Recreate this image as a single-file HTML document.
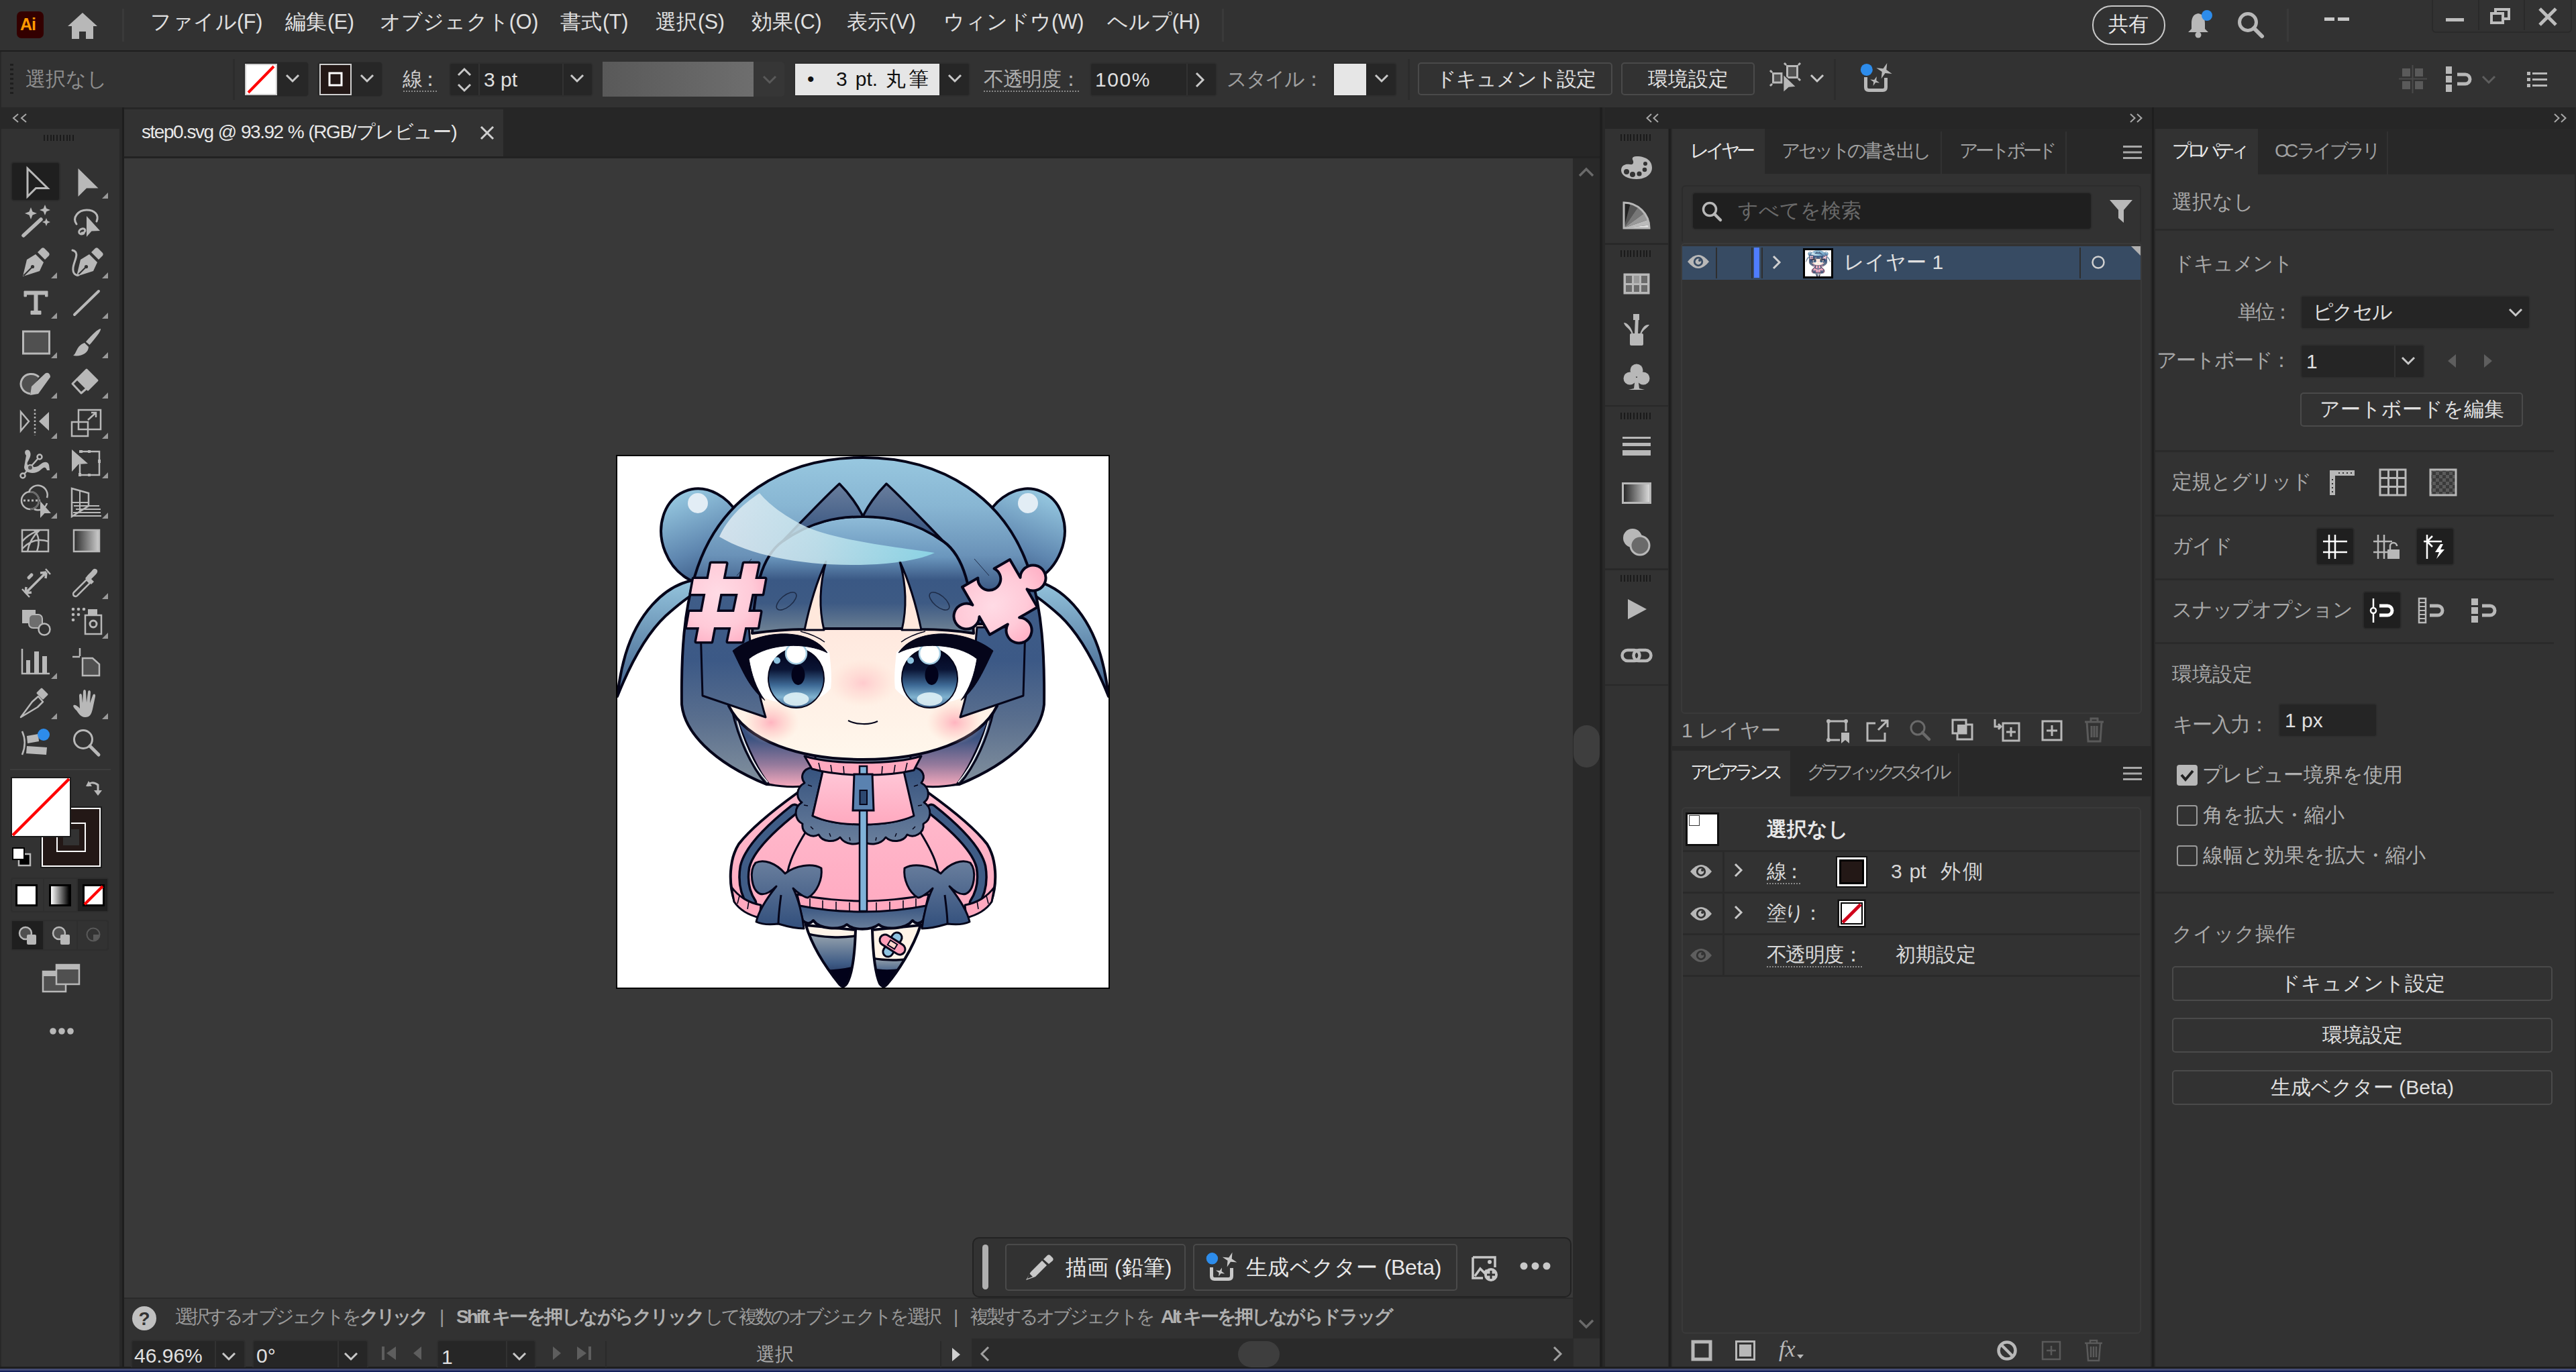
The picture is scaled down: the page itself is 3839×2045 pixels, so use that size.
<!DOCTYPE html>
<html><head><meta charset="utf-8">
<style>
html,body{margin:0;padding:0}
body{width:3839px;height:2045px;overflow:hidden;background:#282828;position:relative;font-family:"Liberation Sans",sans-serif;color:#d8d8d8}
.a{position:absolute}
.t{position:absolute;white-space:nowrap;line-height:1;font-family:"Liberation Sans",sans-serif}
svg{position:absolute;overflow:visible}
</style></head><body>

<!-- MENU BAR -->
<div class="a" style="left:0;top:0;width:3839px;height:75px;background:#323232"></div>
<div class="a" style="left:0;top:75px;width:3839px;height:2px;background:#1e1e1e"></div>

<!-- CONTROL BAR -->
<div class="a" style="left:2px;top:77px;width:3837px;height:83px;background:#323232"></div>

<!-- MENU CONTENT -->
<div class="a" style="left:25px;top:17px;width:40px;height:40px;border-radius:7px;background:#330000"></div>
<div class="t" style="left:30px;top:24px;font-size:25px;font-weight:bold;color:#ff9a00;letter-spacing:-1px">Ai</div>
<svg style="left:100px;top:18px" width="46" height="42" viewBox="0 0 46 42"><path d="M23 1 L45 21 L39 21 L39 40 L28 40 L28 29 L18 29 L18 40 L7 40 L7 21 L1 21 Z" fill="#b8b8b8"/></svg>
<div class="a" style="left:182px;top:13px;width:3px;height:49px;background:#3a3a3a"></div>
<div class="t" style="left:224px;top:17px;font-size:30.5px;color:#e0e0e0;width:167.0px;text-align:justify;text-align-last:justify;letter-spacing:-0.30px">ファイル(F)</div>
<div class="t" style="left:425px;top:17px;font-size:30.5px;color:#e0e0e0;width:102.7px;text-align:justify;text-align-last:justify;letter-spacing:-0.30px">編集(E)</div>
<div class="t" style="left:566px;top:17px;font-size:30.5px;color:#e0e0e0;width:236.0px;text-align:justify;text-align-last:justify;letter-spacing:-0.30px">オブジェクト(O)</div>
<div class="t" style="left:835px;top:17px;font-size:30.5px;color:#e0e0e0;width:101.0px;text-align:justify;text-align-last:justify;letter-spacing:-0.30px">書式(T)</div>
<div class="t" style="left:977px;top:17px;font-size:30.5px;color:#e0e0e0;width:102.7px;text-align:justify;text-align-last:justify;letter-spacing:-0.30px">選択(S)</div>
<div class="t" style="left:1120px;top:17px;font-size:30.5px;color:#e0e0e0;width:104.3px;text-align:justify;text-align-last:justify;letter-spacing:-0.30px">効果(C)</div>
<div class="t" style="left:1262px;top:17px;font-size:30.5px;color:#e0e0e0;width:102.7px;text-align:justify;text-align-last:justify;letter-spacing:-0.30px">表示(V)</div>
<div class="t" style="left:1406px;top:17px;font-size:30.5px;color:#e0e0e0;width:209.1px;text-align:justify;text-align-last:justify;letter-spacing:-0.30px">ウィンドウ(W)</div>
<div class="t" style="left:1650px;top:17px;font-size:30.5px;color:#e0e0e0;width:138.3px;text-align:justify;text-align-last:justify;letter-spacing:-0.30px">ヘルプ(H)</div>
<div class="a" style="left:1821px;top:13px;width:3px;height:49px;background:#3a3a3a"></div>

<div class="a" style="left:3118px;top:8px;width:105px;height:55px;border:2.5px solid #c8c8c8;border-radius:29px"></div>
<div class="t" style="left:3142px;top:21px;font-size:30px;color:#e8e8e8;width:60.0px;text-align:justify;text-align-last:justify;letter-spacing:-0.30px">共有</div>
<svg style="left:3258px;top:14px" width="44" height="44" viewBox="0 0 44 44"><path d="M18 6 C10 7 8 14 8 21 L8 29 L3 34 L33 34 L28 29 L28 21 C28 14 26 7 18 6 Z" fill="#b8b8b8"/><circle cx="18" cy="38" r="4.5" fill="#b8b8b8"/><circle cx="31" cy="9" r="8" fill="#2d8ceb"/></svg>
<svg style="left:3333px;top:16px" width="44" height="44" viewBox="0 0 44 44"><circle cx="17" cy="17" r="12.5" fill="none" stroke="#b8b8b8" stroke-width="5"/><path d="M26 26 L38 38" stroke="#b8b8b8" stroke-width="6" stroke-linecap="round"/></svg>
<div class="a" style="left:3408px;top:13px;width:3px;height:49px;background:#3a3a3a"></div>
<div class="a" style="left:3464px;top:26px;width:15px;height:5px;background:#c8c8c8"></div>
<div class="a" style="left:3484px;top:26px;width:17px;height:5px;background:#c8c8c8"></div>
<div class="a" style="left:3624px;top:-3px;width:205px;height:48px;border:2px solid #2a2a2a;border-radius:0 0 6px 6px;background:#323232"></div>
<div class="a" style="left:3693px;top:0;width:2px;height:45px;background:#2a2a2a"></div>
<div class="a" style="left:3761px;top:0;width:2px;height:45px;background:#2a2a2a"></div>
<div class="a" style="left:3645px;top:27px;width:27px;height:5px;background:#bdbdbd"></div>
<svg style="left:3711px;top:11px" width="32" height="28" viewBox="0 0 32 28"><rect x="2" y="9" width="17" height="14" fill="none" stroke="#bdbdbd" stroke-width="4"/><path d="M8 9 V3 H28 V17 H19" fill="none" stroke="#bdbdbd" stroke-width="4"/></svg>
<svg style="left:3782px;top:10px" width="30" height="30" viewBox="0 0 30 30"><path d="M3 3 L27 27 M27 3 L3 27" stroke="#bdbdbd" stroke-width="5"/></svg>

<!-- CONTROL CONTENT -->
<div class="a" style="left:15px;top:95px;width:5px;height:47px;background:repeating-linear-gradient(#1e1e1e 0 3px,transparent 3px 7px)"></div>
<div class="t" style="left:38px;top:103px;font-size:30px;color:#8f8f8f;width:122.0px;text-align:justify;text-align-last:justify;letter-spacing:-0.30px">選択なし</div>
<div class="a" style="left:347px;top:88px;width:3px;height:61px;background:#2c2c2c"></div>
<!-- fill -->
<div class="a" style="left:363px;top:92px;width:97px;height:52px;border-radius:5px;background:#272727;border:1px solid #2c2c2c;box-sizing:border-box"></div>
<svg style="left:365px;top:95px" width="48" height="47" viewBox="0 0 48 47"><rect x="1" y="1" width="46" height="45" fill="#fff" stroke="#cfcfcf" stroke-width="2"/><path d="M5 43 L43 4" stroke="#f00" stroke-width="4"/></svg>
<svg style="left:425px;top:110px" width="22" height="14" viewBox="0 0 22 14"><path d="M2 2 L11 11 L20 2" fill="none" stroke="#c8c8c8" stroke-width="3"/></svg>
<!-- stroke -->
<div class="a" style="left:473px;top:92px;width:97px;height:52px;border-radius:5px;background:#272727;border:1px solid #2c2c2c;box-sizing:border-box"></div>
<svg style="left:476px;top:95px" width="48" height="47" viewBox="0 0 48 47"><rect x="1" y="1" width="46" height="45" fill="#231816" stroke="#cfcfcf" stroke-width="2"/><rect x="15" y="14" width="18" height="18" fill="none" stroke="#fff" stroke-width="3"/></svg>
<svg style="left:536px;top:110px" width="22" height="14" viewBox="0 0 22 14"><path d="M2 2 L11 11 L20 2" fill="none" stroke="#c8c8c8" stroke-width="3"/></svg>
<div class="t" style="left:600px;top:103px;font-size:30px;color:#cfcfcf;width:52.0px;text-align:justify;text-align-last:justify;letter-spacing:-4.30px">線：</div>
<div class="a" style="left:601px;top:135px;width:51px;height:2px;background:repeating-linear-gradient(90deg,#8a8a8a 0 2px,transparent 2px 4px)"></div>
<!-- weight spinner -->
<div class="a" style="left:669px;top:93px;width:215px;height:51px;border-radius:5px;background:#262626;border:2px solid #2e2e2e;box-sizing:border-box"></div>
<div class="a" style="left:713px;top:95px;width:2px;height:47px;background:#323232"></div>
<div class="a" style="left:838px;top:95px;width:2px;height:47px;background:#323232"></div>
<svg style="left:680px;top:99px" width="24" height="40" viewBox="0 0 24 40"><path d="M3 13 L12 4 L21 13 M3 27 L12 36 L21 27" fill="none" stroke="#c8c8c8" stroke-width="3"/></svg>
<div class="t" style="left:721px;top:104px;font-size:30px;color:#e0e0e0">3 pt</div>
<svg style="left:849px;top:110px" width="22" height="14" viewBox="0 0 22 14"><path d="M2 2 L11 11 L20 2" fill="none" stroke="#c8c8c8" stroke-width="3"/></svg>
<!-- variable width -->
<div class="a" style="left:898px;top:92px;width:225px;height:52px;background:linear-gradient(90deg,#595959,#6e6e6e)"></div>
<div class="a" style="left:1123px;top:92px;width:46px;height:52px;background:#363636;border-radius:0 5px 5px 0"></div>
<svg style="left:1136px;top:112px" width="22" height="14" viewBox="0 0 22 14"><path d="M2 2 L11 11 L20 2" fill="none" stroke="#5a5a5a" stroke-width="3"/></svg>
<!-- brush -->
<div class="a" style="left:1183px;top:93px;width:263px;height:51px;border-radius:5px;background:#262626;border:2px solid #2e2e2e;box-sizing:border-box"></div>
<div class="a" style="left:1185px;top:95px;width:215px;height:47px;background:#e6e6e6"></div>
<div class="t" style="left:1203px;top:103px;font-size:30px;color:#111">•</div><div class="t" style="left:1246px;top:103px;font-size:30px;color:#111;width:138.0px;text-align:justify;text-align-last:justify;letter-spacing:0.00px">3 pt. 丸筆</div>
<svg style="left:1412px;top:110px" width="22" height="14" viewBox="0 0 22 14"><path d="M2 2 L11 11 L20 2" fill="none" stroke="#c8c8c8" stroke-width="3"/></svg>
<div class="t" style="left:1466px;top:103px;font-size:30px;color:#b0b0b0;width:143.0px;text-align:justify;text-align-last:justify;letter-spacing:-1.70px">不透明度：</div>
<div class="a" style="left:1466px;top:135px;width:143px;height:2px;background:repeating-linear-gradient(90deg,#8a8a8a 0 2px,transparent 2px 4px)"></div>
<div class="a" style="left:1624px;top:93px;width:190px;height:51px;border-radius:5px;background:#262626;border:2px solid #2e2e2e;box-sizing:border-box"></div>
<div class="a" style="left:1768px;top:95px;width:2px;height:47px;background:#323232"></div>
<div class="t" style="left:1632px;top:104px;font-size:30px;color:#e0e0e0;letter-spacing:1.57px">100%</div>
<svg style="left:1781px;top:107px" width="14" height="24" viewBox="0 0 14 24"><path d="M2 2 L12 12 L2 22" fill="none" stroke="#c8c8c8" stroke-width="3"/></svg>
<div class="t" style="left:1828px;top:103px;font-size:30px;color:#a0a0a0;width:142.0px;text-align:justify;text-align-last:justify;letter-spacing:-2.70px">スタイル：</div>
<div class="a" style="left:1985px;top:93px;width:97px;height:51px;border-radius:5px;background:#262626;border:2px solid #2e2e2e;box-sizing:border-box"></div>
<div class="a" style="left:1988px;top:95px;width:48px;height:47px;background:#e6e6e6"></div>
<svg style="left:2048px;top:110px" width="22" height="14" viewBox="0 0 22 14"><path d="M2 2 L11 11 L20 2" fill="none" stroke="#c8c8c8" stroke-width="3"/></svg>
<div class="a" style="left:2098px;top:88px;width:3px;height:61px;background:#2c2c2c"></div>
<div class="a" style="left:2113px;top:93px;width:290px;height:49px;border-radius:5px;border:2px solid #4a4a4a;box-sizing:border-box"></div>
<div class="t" style="left:2140px;top:103px;font-size:30px;color:#e0e0e0;width:238.0px;text-align:justify;text-align-last:justify;letter-spacing:-1.30px">ドキュメント設定</div>
<div class="a" style="left:2416px;top:93px;width:199px;height:49px;border-radius:5px;border:2px solid #4a4a4a;box-sizing:border-box"></div>
<div class="t" style="left:2456px;top:103px;font-size:30px;color:#e0e0e0;width:120.0px;text-align:justify;text-align-last:justify;letter-spacing:-0.30px">環境設定</div>
<svg style="left:2636px;top:92px" width="50" height="50" viewBox="0 0 50 50"><rect x="6.5" y="17.5" width="12.5" height="13.5" fill="#505050" stroke="#b8b8b8" stroke-width="3"/><path d="M5 16 L2 13 M5 33 L2 36 M26 5 L23 2 M44 5 L47 2 M44 25 L47 28" stroke="#b8b8b8" stroke-width="3"/><rect x="27.5" y="6.5" width="15" height="17" fill="#505050" stroke="#b8b8b8" stroke-width="3"/><path d="M21.6 18.7 L21.6 46 L30 38.5 L41 37.5 Z" fill="#b8b8b8" stroke="#323232" stroke-width="1.5"/></svg>
<svg style="left:2697px;top:110px" width="22" height="14" viewBox="0 0 22 14"><path d="M2 2 L11 11 L20 2" fill="none" stroke="#c8c8c8" stroke-width="3"/></svg>
<div class="a" style="left:2733px;top:88px;width:3px;height:61px;background:#2c2c2c"></div>
<svg style="left:2768px;top:88px" width="54" height="54" viewBox="0 0 54 54"><path d="M12.5 27 V42 Q12.5 46.5 17 46.5 H38 Q42.5 46.5 42.5 42 V28" fill="none" stroke="#b8b8b8" stroke-width="5"/><path d="M44.3 5.9 L43.3 16.1 L51.7 21.9 L41.5 20.9 L35.7 29.3 L36.7 19.1 L28.3 13.3 L38.5 14.3 Z" fill="#b8b8b8"/><path d="M28.8 26.0 L28.3 32.0 L33.2 35.6 L27.2 35.1 L23.6 40.0 L24.1 34.0 L19.2 30.4 L25.2 30.9 Z" fill="#b8b8b8"/><circle cx="13.8" cy="15.9" r="9" fill="#2d8ceb"/></svg>
<svg style="left:3575px;top:97px" width="42" height="42" viewBox="0 0 42 42"><rect x="5" y="5" width="12" height="12" fill="#5a5a5a"/><rect x="24" y="5" width="12" height="12" fill="#5a5a5a"/><rect x="5" y="24" width="12" height="12" fill="#5a5a5a"/><rect x="24" y="24" width="12" height="12" fill="#5a5a5a"/><path d="M20.5 0 V42 M0 20.5 H42" stroke="#4a4a4a" stroke-width="2"/></svg>
<svg style="left:3645px;top:99px" width="46" height="38" viewBox="0 0 46 38"><rect x="0" y="0" width="9" height="11" fill="#b8b8b8"/><rect x="0" y="14" width="9" height="10" fill="#b8b8b8"/><rect x="0" y="27" width="9" height="11" fill="#b8b8b8"/><path d="M17 12 H29 A7 7 0 0 1 29 26 H17" fill="none" stroke="#b8b8b8" stroke-width="5"/></svg>
<svg style="left:3698px;top:112px" width="22" height="14" viewBox="0 0 22 14"><path d="M2 2 L11 11 L20 2" fill="none" stroke="#5e5e5e" stroke-width="3"/></svg>
<svg style="left:3766px;top:107px" width="30" height="24" viewBox="0 0 30 24"><rect x="0" y="0" width="5" height="5" fill="#b8b8b8"/><rect x="8" y="1" width="22" height="3" fill="#b8b8b8"/><rect x="0" y="9" width="5" height="5" fill="#b8b8b8"/><rect x="8" y="10" width="22" height="3" fill="#b8b8b8"/><rect x="0" y="18" width="5" height="5" fill="#b8b8b8"/><rect x="8" y="19" width="22" height="3" fill="#b8b8b8"/></svg>

<!-- LEFT TOOLBAR -->
<div class="a" style="left:2px;top:160px;width:177px;height:31px;background:#282828"></div>
<div class="a" style="left:2px;top:192px;width:176px;height:1845px;background:#323232"></div>

<svg style="left:18px;top:169px" width="24" height="14" viewBox="0 0 24 14"><path d="M9 1 L2 7 L9 13 M21 1 L14 7 L21 13" fill="none" stroke="#a8a8a8" stroke-width="2"/></svg>
<div class="a" style="left:65px;top:201px;width:48px;height:9px;background:repeating-linear-gradient(90deg,#1a1a1a 0 2px,transparent 2px 4.8px)"></div>
<div class="a" style="left:16px;top:241px;width:74px;height:59px;border-radius:5px;background:#1f1f1f;border:2px solid #2b2b2b;box-sizing:border-box"></div>
<svg style="left:29.0px;top:247.5px" width="48" height="48" viewBox="0 0 48 48"><path d="M12 3 L12 45 L24.5 32.5 L42 32.5 Z" fill="#1f1f1f" stroke="#b8b8b8" stroke-width="3" stroke-linejoin="miter"/></svg>
<svg style="left:104.5px;top:247.5px" width="48" height="48" viewBox="0 0 48 48"><path d="M11.5 3 L11.5 45 L24 32.5 L41.5 32.5 Z" fill="#b8b8b8"/></svg>
<svg style="left:151.5px;top:286.5px" width="10" height="10" viewBox="0 0 10 10"><path d="M9 0 V9 H0 Z" fill="#9a9a9a"/></svg>
<svg style="left:29.0px;top:307.2px" width="48" height="48" viewBox="0 0 48 48"><path d="M6 44 L32 20" stroke="#b8b8b8" stroke-width="5.5" stroke-linecap="round"/><path d="M17 2 L19.52 8.48 L26 11 L19.52 13.52 L17 20 L14.48 13.52 L8 11 L14.48 8.48 Z M38 -2 L40.24 3.76 L46 6 L40.24 8.24 L38 14 L35.76 8.24 L30 6 L35.76 3.76 Z M40 18 L41.68 22.32 L46 24 L41.68 25.68 L40 30 L38.32 25.68 L34 24 L38.32 22.32 Z" fill="#b8b8b8"/></svg>
<svg style="left:104.5px;top:307.2px" width="48" height="48" viewBox="0 0 48 48"><path d="M24 15 L24 46 L31.5 37.5 L44 37 Z" fill="#b8b8b8"/><path d="M20 41 C12 45 10 36 17 34 C23 32 24 40 17 40 M9 27 C2 17 12 6 24 6 C36 6 43 13 39 23" fill="none" stroke="#b8b8b8" stroke-width="3" stroke-linecap="round"/></svg>
<svg style="left:29.0px;top:366.9px" width="48" height="48" viewBox="0 0 48 48"><path d="M27 9 L33 3 Q35 1.5 37 3 L44 10 Q45.5 12 44 14 L38 20 Z" fill="#b8b8b8"/><path d="M24 12 L36 24 L30 37 L5 45 L11 20 Z" fill="#b8b8b8"/><path d="M6 44 L18 32" stroke="#323232" stroke-width="2.2"/><circle cx="19.5" cy="30.5" r="2.6" fill="#323232"/></svg>
<svg style="left:76.0px;top:405.9px" width="10" height="10" viewBox="0 0 10 10"><path d="M9 0 V9 H0 Z" fill="#9a9a9a"/></svg>
<svg style="left:104.5px;top:366.9px" width="48" height="48" viewBox="0 0 48 48"><path d="M31 9 L37 3 Q39 1.5 41 3 L48 10 Q49.5 12 48 14 L42 20 Z" fill="#b8b8b8"/><path d="M28 12 L40 24 L34 37 L9 45 L15 20 Z" fill="#b8b8b8"/><path d="M10 44 L22 32" stroke="#323232" stroke-width="2.2"/><circle cx="23.5" cy="30.5" r="2.6" fill="#323232"/><path d="M3 6 C15 9 5 22 4 32 C3 41 8 44 12 43" fill="none" stroke="#b8b8b8" stroke-width="3" stroke-linecap="round"/></svg>
<svg style="left:151.5px;top:405.9px" width="10" height="10" viewBox="0 0 10 10"><path d="M9 0 V9 H0 Z" fill="#9a9a9a"/></svg>
<svg style="left:29.0px;top:426.6px" width="48" height="48" viewBox="0 0 48 48"><path d="M7 7 H42 V15 H38.5 V12 H27 V36.5 H32 V41.5 H17 V36.5 H22 V12 H10.5 V15 H7 Z" fill="#b8b8b8" stroke="#b8b8b8" stroke-width="1" stroke-linejoin="round"/></svg>
<svg style="left:76.0px;top:465.6px" width="10" height="10" viewBox="0 0 10 10"><path d="M9 0 V9 H0 Z" fill="#9a9a9a"/></svg>
<svg style="left:104.5px;top:426.6px" width="48" height="48" viewBox="0 0 48 48"><path d="M6 42 L42 7" stroke="#b8b8b8" stroke-width="4" stroke-linecap="round"/></svg>
<svg style="left:151.5px;top:465.6px" width="10" height="10" viewBox="0 0 10 10"><path d="M9 0 V9 H0 Z" fill="#9a9a9a"/></svg>
<svg style="left:29.0px;top:486.3px" width="48" height="48" viewBox="0 0 48 48"><rect x="5.5" y="8" width="39" height="33" fill="#505050" stroke="#b8b8b8" stroke-width="3"/></svg>
<svg style="left:76.0px;top:525.3px" width="10" height="10" viewBox="0 0 10 10"><path d="M9 0 V9 H0 Z" fill="#9a9a9a"/></svg>
<svg style="left:104.5px;top:486.3px" width="48" height="48" viewBox="0 0 48 48"><path d="M45 4 C46 8 33 23 28.5 28 L23 23.5 C27 19 40 4 45 4 Z" fill="#b8b8b8"/><path d="M21 25 L27 31 C27 40 16 46 4 44 C10 40 8 30 21 25 Z" fill="#b8b8b8"/></svg>
<svg style="left:151.5px;top:525.3px" width="10" height="10" viewBox="0 0 10 10"><path d="M9 0 V9 H0 Z" fill="#9a9a9a"/></svg>
<svg style="left:29.0px;top:546.0px" width="48" height="48" viewBox="0 0 48 48"><path d="M16 41 C4 39 -1 28 4 19 C9 10 22 9 29 16" fill="#505050" stroke="#b8b8b8" stroke-width="3"/><path d="M18 30 L16 43 L28 41 L46 16 Q46 12 43 10 Q40 9 38 11 Z" fill="#b8b8b8"/></svg>
<svg style="left:76.0px;top:585.0px" width="10" height="10" viewBox="0 0 10 10"><path d="M9 0 V9 H0 Z" fill="#9a9a9a"/></svg>
<svg style="left:104.5px;top:546.0px" width="48" height="48" viewBox="0 0 48 48"><path d="M24 5 L40 21 L26 35 L10 19 Z" fill="#b8b8b8" stroke="#b8b8b8" stroke-width="3" stroke-linejoin="round"/><path d="M10 19 L3 26 L16 40 L24 33" fill="none" stroke="#b8b8b8" stroke-width="3" stroke-linejoin="round"/></svg>
<svg style="left:151.5px;top:585.0px" width="10" height="10" viewBox="0 0 10 10"><path d="M9 0 V9 H0 Z" fill="#9a9a9a"/></svg>
<svg style="left:29.0px;top:605.7px" width="48" height="48" viewBox="0 0 48 48"><path d="M2 8 L2 36 L14 22 Z" fill="none" stroke="#b8b8b8" stroke-width="2.5"/><path d="M23 4 V43" stroke="#b8b8b8" stroke-width="2.5" stroke-dasharray="2.5 3"/><path d="M44 8 L44 36 L29 22 Z" fill="#b8b8b8"/></svg>
<svg style="left:76.0px;top:644.7px" width="10" height="10" viewBox="0 0 10 10"><path d="M9 0 V9 H0 Z" fill="#9a9a9a"/></svg>
<svg style="left:104.5px;top:605.7px" width="48" height="48" viewBox="0 0 48 48"><rect x="12" y="5" width="33" height="29" fill="none" stroke="#b8b8b8" stroke-width="2.5"/><rect x="2" y="23" width="24" height="21" fill="none" stroke="#b8b8b8" stroke-width="2.5"/><path d="M26 20 L38 9 M31 9 H38 V16" fill="none" stroke="#b8b8b8" stroke-width="2.5"/></svg>
<svg style="left:151.5px;top:644.7px" width="10" height="10" viewBox="0 0 10 10"><path d="M9 0 V9 H0 Z" fill="#9a9a9a"/></svg>
<svg style="left:29.0px;top:665.4px" width="48" height="48" viewBox="0 0 48 48"><path d="M10 14 C4 6 14 2 16 9 C18 14 14 20 12 24 C9 31 24 34 30 28 C36 23 42 22 44 28 L45 36 L41 36 C39 30 36 31 32 35 C24 43 7 41 7 31 Z" fill="#b8b8b8"/><path d="M4 45 L29 17" stroke="#b8b8b8" stroke-width="2.5"/><circle cx="5" cy="44" r="3.5" fill="#323232" stroke="#b8b8b8" stroke-width="2.5"/><circle cx="30" cy="16" r="3.5" fill="#323232" stroke="#b8b8b8" stroke-width="2.5"/><circle cx="16" cy="32" r="4" fill="#505050" stroke="#b8b8b8" stroke-width="2"/></svg>
<svg style="left:76.0px;top:704.4px" width="10" height="10" viewBox="0 0 10 10"><path d="M9 0 V9 H0 Z" fill="#9a9a9a"/></svg>
<svg style="left:104.5px;top:665.4px" width="48" height="48" viewBox="0 0 48 48"><path d="M2 5 L2 38 L12 27 L26 26 Z" fill="#b8b8b8"/><path d="M17 8 H43 V43 H14 V27" fill="none" stroke="#b8b8b8" stroke-width="2.5"/><path d="M13 8 h5 M28 6 v4 M43 20 v5 M14 40 v5 M28 41 v4" stroke="#b8b8b8" stroke-width="4"/></svg>
<svg style="left:151.5px;top:704.4px" width="10" height="10" viewBox="0 0 10 10"><path d="M9 0 V9 H0 Z" fill="#9a9a9a"/></svg>
<svg style="left:29.0px;top:725.1px" width="48" height="48" viewBox="0 0 48 48"><circle cx="16" cy="21" r="13" fill="none" stroke="#b8b8b8" stroke-width="2.5"/><path d="M16 8 A13 13 0 0 1 16 34" fill="none" stroke="#6a6a6a" stroke-width="2.5"/><path d="M14 8.5 A14 14 0 0 1 41 17 M41 25 A14 14 0 0 1 22 34" fill="none" stroke="#b8b8b8" stroke-width="2.5"/><path d="M6 21 H31" stroke="#b8b8b8" stroke-width="3" stroke-dasharray="3 3"/><path d="M31 22 L31 47 L37.5 40 L47 40 Z" fill="#b8b8b8"/></svg>
<svg style="left:76.0px;top:764.1px" width="10" height="10" viewBox="0 0 10 10"><path d="M9 0 V9 H0 Z" fill="#9a9a9a"/></svg>
<svg style="left:104.5px;top:725.1px" width="48" height="48" viewBox="0 0 48 48"><path d="M2 3 L27 10 V29 L2 45 Z" fill="none" stroke="#b8b8b8" stroke-width="2.5"/><path d="M2 24 H27 M14 6 V37 M5 29 h38 M8 34 h37 M4 39 h41 M2 44 h44" stroke="#b8b8b8" stroke-width="2"/></svg>
<svg style="left:151.5px;top:764.1px" width="10" height="10" viewBox="0 0 10 10"><path d="M9 0 V9 H0 Z" fill="#9a9a9a"/></svg>
<svg style="left:29.0px;top:784.8px" width="48" height="48" viewBox="0 0 48 48"><rect x="4" y="5" width="39" height="32" fill="none" stroke="#b8b8b8" stroke-width="2.5"/><path d="M4 22 C14 10 24 8 30 5 M4 33 C16 20 30 18 43 22 M12 37 C14 25 20 14 30 5 M26 37 C30 25 30 14 22 5" fill="none" stroke="#b8b8b8" stroke-width="2.5"/></svg>
<svg style="left:104.5px;top:784.8px" width="48" height="48" viewBox="0 0 48 48"><defs><linearGradient id="tg" x1="0" x2="1"><stop offset="0" stop-color="#2a2a2a"/><stop offset="1" stop-color="#cfcfcf"/></linearGradient></defs><rect x="5" y="5" width="38" height="32" fill="url(#tg)" stroke="#b8b8b8" stroke-width="2.5"/></svg>
<svg style="left:29.0px;top:844.5px" width="48" height="48" viewBox="0 0 48 48"><path d="M4 33 L15 45 M39 3 L46 11" stroke="#b8b8b8" stroke-width="2.5"/><path d="M9 39 L40 8 M9 39 L10 30 M9 39 L18 38 M40 8 L31 9 M40 8 L39 17" stroke="#b8b8b8" stroke-width="3.5"/><path d="M14 16 L18 12" stroke="#b8b8b8" stroke-width="5" stroke-linecap="round"/></svg>
<svg style="left:104.5px;top:844.5px" width="48" height="48" viewBox="0 0 48 48"><path d="M8 44 C4 44 3 40 5 38 L24 19 L29 24 L10 43 Z" fill="none" stroke="#b8b8b8" stroke-width="2.5"/><path d="M22 17 L31 26 L35 22 L31 18 L38 11 C42 7 40 3 37 3 C34 2 33 5 31 7 L27 11 L26 12 Z" fill="#b8b8b8"/></svg>
<svg style="left:151.5px;top:883.5px" width="10" height="10" viewBox="0 0 10 10"><path d="M9 0 V9 H0 Z" fill="#9a9a9a"/></svg>
<svg style="left:29.0px;top:904.2px" width="48" height="48" viewBox="0 0 48 48"><path d="M4 5 H24 V25 H4 Z" fill="#b8b8b8"/><rect x="14" y="12" width="20" height="20" rx="6" fill="#6e6e6e" stroke="#b8b8b8" stroke-width="2"/><circle cx="37" cy="34" r="8.5" fill="#323232" stroke="#b8b8b8" stroke-width="2.5"/></svg>
<svg style="left:104.5px;top:904.2px" width="48" height="48" viewBox="0 0 48 48"><circle cx="4" cy="4" r="2.3" fill="#b8b8b8"/><circle cx="12" cy="4" r="2.3" fill="#b8b8b8"/><circle cx="20" cy="4" r="2.3" fill="#b8b8b8"/><circle cx="4" cy="12" r="2.3" fill="#b8b8b8"/><circle cx="12" cy="12" r="2.3" fill="#b8b8b8"/><circle cx="4" cy="20" r="2.3" fill="#b8b8b8"/><rect x="22" y="13" width="24" height="28" fill="none" stroke="#b8b8b8" stroke-width="2.5"/><rect x="26" y="4" width="14" height="9" fill="#b8b8b8"/><circle cx="34" cy="26" r="5" fill="none" stroke="#b8b8b8" stroke-width="3"/></svg>
<svg style="left:151.5px;top:943.2px" width="10" height="10" viewBox="0 0 10 10"><path d="M9 0 V9 H0 Z" fill="#9a9a9a"/></svg>
<svg style="left:29.0px;top:963.9px" width="48" height="48" viewBox="0 0 48 48"><path d="M4 3 V40 H45" fill="none" stroke="#b8b8b8" stroke-width="2.5"/><rect x="10" y="20" width="6" height="19" fill="#b8b8b8"/><rect x="22" y="7" width="7" height="32" fill="#b8b8b8"/><rect x="34" y="14" width="7" height="25" fill="#b8b8b8"/></svg>
<svg style="left:76.0px;top:1002.9px" width="10" height="10" viewBox="0 0 10 10"><path d="M9 0 V9 H0 Z" fill="#9a9a9a"/></svg>
<svg style="left:104.5px;top:963.9px" width="48" height="48" viewBox="0 0 48 48"><path d="M14 2 V14 M3 15 H14" stroke="#b8b8b8" stroke-width="2.5"/><path d="M18 17 H33 L43 26 V43 H18 Z" fill="#505050" stroke="#b8b8b8" stroke-width="2.5"/></svg>
<svg style="left:29.0px;top:1023.6px" width="48" height="48" viewBox="0 0 48 48"><path d="M2 45 L19 22 L28 14 L35 22 L27 30 Z" fill="none" stroke="#b8b8b8" stroke-width="2.5" stroke-linejoin="round"/><path d="M27 9 L33 3 L41 11 L35 17 Z" fill="#b8b8b8" stroke="#b8b8b8" stroke-width="3" stroke-linejoin="round"/></svg>
<svg style="left:76.0px;top:1062.6px" width="10" height="10" viewBox="0 0 10 10"><path d="M9 0 V9 H0 Z" fill="#9a9a9a"/></svg>
<svg style="left:104.5px;top:1023.6px" width="48" height="48" viewBox="0 0 48 48"><path d="M22 45 C14 45 12 38 8 34 C5 31 3 28 5 27 C8 26 12 30 14 32 L13 13 C13 9 17 9 17 13 L18 24 L19 7 C19 3 23 3 23 7 L24 23 L26 8 C26 4 30 4 30 8 L29 24 L33 13 C34 9 38 10 37 14 L33 33 C31 41 29 45 22 45 Z" fill="#b8b8b8"/></svg>
<svg style="left:151.5px;top:1062.6px" width="10" height="10" viewBox="0 0 10 10"><path d="M9 0 V9 H0 Z" fill="#9a9a9a"/></svg>
<svg style="left:29.0px;top:1083.3px" width="48" height="48" viewBox="0 0 48 48"><path d="M4 7 C9 18 9 30 4 42" fill="none" stroke="#b8b8b8" stroke-width="2.5"/><path d="M11 14 L28 11 L29 22 L12 25 Z" fill="#b8b8b8"/><path d="M11 29 L41 31 L40 42 L10 40 Z" fill="#b8b8b8"/><circle cx="36" cy="12" r="9" fill="#2d8ceb"/></svg>
<svg style="left:104.5px;top:1083.3px" width="48" height="48" viewBox="0 0 48 48"><circle cx="19" cy="19" r="13.5" fill="none" stroke="#b8b8b8" stroke-width="3"/><path d="M29 29 L42 42" stroke="#b8b8b8" stroke-width="5" stroke-linecap="round"/></svg>
<div class="a" style="left:15px;top:1146px;width:150px;height:2px;background:#3c3c3c"></div>
<div class="a" style="left:62px;top:1204px;width:88px;height:88px;background:#231816;border:2px solid #fff;box-sizing:border-box;outline:2px solid #1c1c1c"></div>
<div class="a" style="left:84px;top:1226px;width:44px;height:44px;border:2px solid #fff;box-sizing:border-box;background:#323232"></div>
<div class="a" style="left:86px;top:1228px;width:40px;height:40px;border:8px solid #231816;box-sizing:border-box"></div>
<svg style="left:16px;top:1158px" width="90" height="90" viewBox="0 0 90 90"><rect x="1" y="1" width="88" height="88" fill="#fff" stroke="#1c1c1c" stroke-width="2"/><path d="M3 87 L87 3" stroke="#f00" stroke-width="4.5"/></svg>
<svg style="left:126px;top:1160px" width="30" height="30" viewBox="0 0 30 30"><path d="M4 12 C6 6 14 5 20 10 L20 22" fill="none" stroke="#b8b8b8" stroke-width="3"/><path d="M2 12 L6 4 L11 12 Z M14 18 L26 18 L20 26 Z" fill="#b8b8b8"/></svg>
<svg style="left:16px;top:1261px" width="32" height="32" viewBox="0 0 32 32"><rect x="12" y="12" width="17" height="17" fill="#000" stroke="#b8b8b8" stroke-width="2.5"/><rect x="3" y="3" width="17" height="17" fill="#fff" stroke="#000" stroke-width="2"/></svg>
<div class="a" style="left:16px;top:1308px;width:146px;height:52px;border-radius:4px;border:2px solid #2e2e2e;box-sizing:border-box;background:#323232"></div>
<div class="a" style="left:115px;top:1310px;width:45px;height:48px;background:#1f1f1f"></div>
<div class="a" style="left:64px;top:1310px;width:2px;height:48px;background:#2e2e2e"></div><div class="a" style="left:114px;top:1310px;width:2px;height:48px;background:#2e2e2e"></div>
<div class="a" style="left:23px;top:1318px;width:33px;height:33px;background:#fff;border:3px solid #000;box-sizing:border-box"></div>
<div class="a" style="left:73px;top:1318px;width:33px;height:33px;background:linear-gradient(90deg,#fff,#000);border:3px solid #000;box-sizing:border-box"></div>
<svg style="left:123px;top:1318px" width="33" height="33" viewBox="0 0 33 33"><rect x="1.5" y="1.5" width="30" height="30" fill="#fff" stroke="#000" stroke-width="3"/><path d="M3 30 L30 3" stroke="#f00" stroke-width="4"/></svg>
<div class="a" style="left:16px;top:1371px;width:146px;height:46px;border-radius:4px;border:2px solid #2e2e2e;box-sizing:border-box;background:#323232"></div>
<div class="a" style="left:18px;top:1373px;width:46px;height:42px;background:#1f1f1f"></div>
<div class="a" style="left:64px;top:1373px;width:2px;height:42px;background:#2e2e2e"></div><div class="a" style="left:114px;top:1373px;width:2px;height:42px;background:#2e2e2e"></div>
<svg style="left:26px;top:1380px" width="30" height="30" viewBox="0 0 30 30"><circle cx="12" cy="11" r="9" fill="#505050" stroke="#b8b8b8" stroke-width="2.5"/><rect x="14" y="13" width="14" height="15" rx="2" fill="#b8b8b8"/></svg>
<svg style="left:76px;top:1380px" width="30" height="30" viewBox="0 0 30 30"><circle cx="12" cy="11" r="9" fill="#505050" stroke="#b8b8b8" stroke-width="2.5"/><rect x="14" y="13" width="14" height="15" rx="2" fill="#b8b8b8"/></svg>
<svg style="left:126px;top:1380px" width="30" height="30" viewBox="0 0 30 30"><circle cx="13" cy="13" r="9.5" fill="none" stroke="#5a5a5a" stroke-width="2"/><path d="M13 13 H22 A9 9 0 0 1 13 22 Z" fill="#5a5a5a"/></svg>
<svg style="left:62px;top:1436px" width="58" height="44" viewBox="0 0 58 44"><rect x="2" y="12" width="34" height="30" fill="#505050" stroke="#b8b8b8" stroke-width="2.5"/><rect x="2" y="12" width="34" height="7" fill="#b8b8b8"/><rect x="22" y="2" width="34" height="29" fill="#505050" stroke="#b8b8b8" stroke-width="2.5"/><rect x="22" y="2" width="34" height="7" fill="#b8b8b8"/></svg>
<svg style="left:72px;top:1530px" width="42" height="14" viewBox="0 0 42 14"><circle cx="7" cy="7" r="4.8" fill="#b8b8b8"/><circle cx="20" cy="7" r="4.8" fill="#b8b8b8"/><circle cx="33" cy="7" r="4.8" fill="#b8b8b8"/></svg>

<!-- DOCUMENT AREA -->
<div class="a" style="left:185px;top:160px;width:2199px;height:74px;background:#262626"></div>
<div class="a" style="left:185px;top:163px;width:565px;height:70px;background:#323232"></div>
<div class="a" style="left:185px;top:236px;width:2159px;height:1698px;background:#393939"></div>
<div class="a" style="left:2344px;top:236px;width:40px;height:1759px;background:#292929"></div>
<div class="a" style="left:185px;top:1936px;width:2159px;height:59px;background:#323232"></div>
<div class="a" style="left:185px;top:1995px;width:2199px;height:43px;background:#323232"></div>
<div class="a" style="left:1448px;top:1995px;width:897px;height:43px;background:#2a2a2a"></div>

<!-- RIGHT DOCK -->
<div class="a" style="left:2392px;top:160px;width:1445px;height:32px;background:#262626"></div>
<div class="a" style="left:2392px;top:192px;width:94px;height:170px;background:#323232"></div>
<div class="a" style="left:2392px;top:365px;width:94px;height:239px;background:#323232"></div>
<div class="a" style="left:2392px;top:606px;width:94px;height:241px;background:#323232"></div>
<div class="a" style="left:2392px;top:850px;width:94px;height:170px;background:#323232"></div>
<div class="a" style="left:2392px;top:1022px;width:94px;height:1015px;background:#323232"></div>

<div class="a" style="left:2492px;top:192px;width:713px;height:920px;background:#323232"></div>
<div class="a" style="left:2492px;top:1119px;width:713px;height:918px;background:#323232"></div>
<div class="a" style="left:3212px;top:192px;width:625px;height:1845px;background:#323232"></div>

<div class="a" style="left:182px;top:160px;width:3px;height:1885px;background:#1e1e1e"></div>
<div class="a" style="left:2384px;top:160px;width:4px;height:1885px;background:#1e1e1e"></div>
<div class="a" style="left:2487px;top:192px;width:3px;height:1853px;background:#1e1e1e"></div>
<div class="a" style="left:3207px;top:160px;width:3px;height:1885px;background:#1e1e1e"></div>
<div class="a" style="left:0;top:2037px;width:3839px;height:3px;background:#1e1e1e"></div>
<div class="a" style="left:0;top:2040px;width:3839px;height:3px;background:#434b76"></div>
<div class="a" style="left:0;top:2043px;width:3839px;height:2px;background:#12205a"></div>

<!-- ARTBOARD -->
<div class="a" style="left:918px;top:678px;width:732px;height:792px;border:2px solid #000;background:#fff"></div>

<svg style="left:920px;top:680px;overflow:hidden" width="732" height="792" viewBox="0 0 732 792">
<defs>
<linearGradient id="gHair" x1="0" y1="0" x2="0" y2="492" gradientUnits="userSpaceOnUse">
<stop offset="0" stop-color="#98c8e0"/><stop offset="0.15" stop-color="#88b6d3"/><stop offset="0.3" stop-color="#6a92b8"/><stop offset="0.4" stop-color="#3f5d88"/><stop offset="0.62" stop-color="#3c5986"/><stop offset="0.8" stop-color="#5a6f8e"/><stop offset="1" stop-color="#83919e"/></linearGradient>
<linearGradient id="gBang" x1="0" y1="90" x2="0" y2="262" gradientUnits="userSpaceOnUse">
<stop offset="0" stop-color="#8fbcd8"/><stop offset="0.35" stop-color="#6a96bd"/><stop offset="0.55" stop-color="#3a5884"/><stop offset="0.75" stop-color="#3d5a84"/><stop offset="1" stop-color="#6f8294"/></linearGradient>
<linearGradient id="gBun" x1="0" y1="0" x2="0" y2="1">
<stop offset="0" stop-color="#96c8e0"/><stop offset="0.6" stop-color="#5f87b0"/><stop offset="1" stop-color="#36547f"/></linearGradient>
<linearGradient id="gTail" x1="0" y1="186" x2="0" y2="355" gradientUnits="userSpaceOnUse">
<stop offset="0" stop-color="#94c4dd"/><stop offset="1" stop-color="#3f5f8a"/></linearGradient>
<linearGradient id="gPinkHair" x1="0" y1="420" x2="0" y2="492" gradientUnits="userSpaceOnUse">
<stop offset="0" stop-color="#3a5280"/><stop offset="0.55" stop-color="#957a9c"/><stop offset="1" stop-color="#f5a9bd"/></linearGradient>
<linearGradient id="gFace" x1="0" y1="250" x2="0" y2="452" gradientUnits="userSpaceOnUse">
<stop offset="0" stop-color="#ffe8de"/><stop offset="1" stop-color="#fff7ec"/></linearGradient>
<linearGradient id="gIris" x1="0" y1="0" x2="0" y2="1">
<stop offset="0" stop-color="#02031c"/><stop offset="0.35" stop-color="#0a1434"/><stop offset="0.62" stop-color="#3e6a96"/><stop offset="0.82" stop-color="#7fb2cf"/><stop offset="1" stop-color="#3c5f8a"/></linearGradient>
<radialGradient id="gBlush"><stop offset="0" stop-color="#ff9fb2" stop-opacity="0.75"/><stop offset="0.6" stop-color="#ffb8b8" stop-opacity="0.35"/><stop offset="1" stop-color="#ffd0c0" stop-opacity="0"/></radialGradient>
<linearGradient id="gPink" x1="0" y1="0" x2="0" y2="1"><stop offset="0" stop-color="#ffc8d8"/><stop offset="1" stop-color="#ffa9bf"/></linearGradient>
<linearGradient id="gJacket" x1="0" y1="460" x2="0" y2="690" gradientUnits="userSpaceOnUse"><stop offset="0" stop-color="#ffbfd0"/><stop offset="1" stop-color="#ffa9c0"/></linearGradient>
<linearGradient id="gNavy" x1="0" y1="0" x2="0" y2="1"><stop offset="0" stop-color="#6a7f9e"/><stop offset="1" stop-color="#324f7c"/></linearGradient>
<linearGradient id="gNavy2" x1="0" y1="0" x2="0" y2="1"><stop offset="0" stop-color="#35527e"/><stop offset="1" stop-color="#6a7f9c"/></linearGradient>
<linearGradient id="gSockL" x1="0" y1="712" x2="0" y2="792" gradientUnits="userSpaceOnUse"><stop offset="0" stop-color="#98a4ae"/><stop offset="0.55" stop-color="#3f5c86"/><stop offset="0.72" stop-color="#2c4068"/><stop offset="0.8" stop-color="#02021a"/><stop offset="1" stop-color="#02021a"/></linearGradient><linearGradient id="gSockR" x1="0" y1="748" x2="0" y2="792" gradientUnits="userSpaceOnUse"><stop offset="0" stop-color="#98a4ae"/><stop offset="0.5" stop-color="#3f5c86"/><stop offset="0.7" stop-color="#2c4068"/><stop offset="0.78" stop-color="#02021a"/><stop offset="1" stop-color="#02021a"/></linearGradient><linearGradient id="gSock" x1="0" y1="0" x2="0" y2="1"><stop offset="0" stop-color="#97a3ad"/><stop offset="0.55" stop-color="#3f5c86"/><stop offset="0.72" stop-color="#2a3f66"/><stop offset="0.8" stop-color="#02021a"/><stop offset="1" stop-color="#02021a"/></linearGradient>
<linearGradient id="gShine" x1="0" y1="0" x2="1" y2="0"><stop offset="0" stop-color="#e2ecf3"/><stop offset="0.45" stop-color="#c8e6ee"/><stop offset="1" stop-color="#8fdcea"/></linearGradient>
<radialGradient id="gClip" cx="0.4" cy="0.4" r="0.7"><stop offset="0" stop-color="#ffdbe5"/><stop offset="0.5" stop-color="#ffcad8"/><stop offset="1" stop-color="#ffa5bd"/></radialGradient>
<radialGradient id="gClipU" cx="150" cy="205" r="95" gradientUnits="userSpaceOnUse"><stop offset="0" stop-color="#ffdbe5"/><stop offset="0.55" stop-color="#ffcad8"/><stop offset="1" stop-color="#ffa5bd"/></radialGradient>
</defs><g id="ch">
<path d="M112 185 C68 194 30 236 12 296 C5 320 2 340 0 358 C16 318 40 268 72 238 C92 220 110 206 126 198 Z" fill="url(#gTail)" stroke="#05051a" stroke-width="4" stroke-linejoin="round" />
<path d="M 620 185 C 664 194 702 236 720 296 C 727 320 730 340 732 358 C 716 318 692 268 660 238 C 640 220 622 206 606 198 Z" fill="url(#gTail)" stroke="#05051a" stroke-width="4" stroke-linejoin="round" />
<ellipse cx="128" cy="120" rx="61" ry="73" transform="rotate(-22 128 120)" fill="url(#gBun)" stroke="#05051a" stroke-width="4"/>
<ellipse cx="604" cy="120" rx="61" ry="73" transform="rotate(22 604 120)" fill="url(#gBun)" stroke="#05051a" stroke-width="4"/>
<circle cx="120" cy="70" r="15" fill="#e2edf5"/><circle cx="612" cy="70" r="15" fill="#e2edf5"/>
<path d="M366 2 C250 2 150 60 115 180 C100 230 95 290 96 370 C100 410 140 455 222 489 L282 492 L366 470 L450 492 L510 489 C592 455 632 410 636 370 C637 290 632 230 617 180 C582 60 482 2 366 2 Z" fill="url(#gHair)" stroke="#05051a" stroke-width="4"/>
<path d="M178 392 C196 440 212 472 226 489 C246 493 266 494 284 491 L300 430 Z" fill="url(#gPinkHair)" stroke="#05051a" stroke-width="3" stroke-linejoin="round" />
<path d="M 554 392 C 536 440 520 472 506 489 C 486 493 466 494 448 491 L 432 430 Z" fill="url(#gPinkHair)" stroke="#05051a" stroke-width="3" stroke-linejoin="round" />
<path d="M171 379 C180 420 198 460 222 489" fill="none" stroke="#05051a" stroke-width="3"/><path d="M561 379 C552 420 534 460 510 489" fill="none" stroke="#05051a" stroke-width="3"/>
<path d="M176 384 C186 425 203 462 224 486" fill="none" stroke="#ffffff" stroke-width="1.5"/><path d="M556 384 C546 425 529 462 508 486" fill="none" stroke="#ffffff" stroke-width="1.5"/>
<path d="M366 462 L290 466 C283 484 278 494 268 502 C232 528 198 556 181 578 C167 600 165 636 175 664 C186 677 200 683 212 686 L284 670 C320 678 345 680 366 680 C387 680 412 678 448 670 L520 686 C532 683 546 677 557 664 C567 636 565 600 551 578 C534 556 500 528 464 502 C454 494 449 484 442 466 Z" fill="url(#gJacket)" stroke="#05051a" stroke-width="4" stroke-linejoin="round"/>
<path d="M264 526 C226 556 196 586 190 612 C186 636 192 654 200 666" fill="none" stroke="#05051a" stroke-width="17" stroke-linecap="round"/>
<path d="M 468 526 C 506 556 536 586 542 612 C 546 636 540 654 532 666" fill="none" stroke="#05051a" stroke-width="17" stroke-linecap="round"/>
<path d="M264 526 C226 556 196 586 190 612 C186 636 192 654 200 666" fill="none" stroke="#3f5c86" stroke-width="10" stroke-linecap="round"/>
<path d="M 468 526 C 506 556 536 586 542 612 C 546 636 540 654 532 666" fill="none" stroke="#3f5c86" stroke-width="10" stroke-linecap="round"/>
<path d="M282 558 C262 590 250 615 252 645" fill="none" stroke="#05051a" stroke-width="3" stroke-linejoin="round" />
<path d="M 450 558 C 470 590 482 615 480 645" fill="none" stroke="#05051a" stroke-width="3" stroke-linejoin="round" />
<path d="M170 642 C180 656 196 666 214 669 L212 688 C196 684 182 676 174 664 Z" fill="#ffa9bf" stroke="#05051a" stroke-width="3" stroke-linejoin="round" />
<path d="M 562 642 C 552 656 536 666 518 669 L 520 688 C 536 684 550 676 558 664 Z" fill="#ffa9bf" stroke="#05051a" stroke-width="3" stroke-linejoin="round" />
<clipPath id="cl1"><path d="M281 699 L355 706 C354 742 350 772 342 786 Q337 794 331 787 C314 766 292 736 281 699 Z"/></clipPath><clipPath id="cl2"><path d="M380 706 L452 699 C440 735 418 768 402 787 Q396 794 391 786 C384 770 381 742 380 706 Z"/></clipPath>
<g clip-path="url(#cl1)"><rect x="270" y="695" width="100" height="100" fill="url(#gSockL)"/><path d="M270 760 Q310 772 362 758 L362 800 L270 800 Z" fill="#02021a"/><path d="M270 690 H370 V712 C340 720 300 718 270 708 Z" fill="#fff4e8"/><path d="M270 708 C300 718 340 720 370 712" fill="none" stroke="#05051a" stroke-width="3.5"/></g>
<g clip-path="url(#cl2)"><rect x="370" y="740" width="100" height="60" fill="url(#gSockR)"/><path d="M372 760 Q400 772 460 756 L460 800 L372 800 Z" fill="#02021a"/><path d="M370 690 H470 V742 C440 752 400 754 370 746 Z" fill="#fff4e8"/><path d="M370 746 C400 754 440 752 470 742" fill="none" stroke="#05051a" stroke-width="3.5"/></g>
<path d="M281 699 L355 706 C354 742 350 772 342 786 Q337 794 331 787 C314 766 292 736 281 699 Z" fill="none" stroke="#05051a" stroke-width="4"/>
<path d="M380 706 L452 699 C440 735 418 768 402 787 Q396 794 391 786 C384 770 381 742 380 706 Z" fill="none" stroke="#05051a" stroke-width="4"/>
<g transform="translate(410 728) rotate(-58)"><rect x="-20" y="-7.5" width="40" height="15" rx="7.5" fill="#8fc3e0" stroke="#05051a" stroke-width="3"/></g>
<g transform="translate(410 728) rotate(32)"><rect x="-21" y="-8" width="42" height="16" rx="8" fill="#ff9fb8" stroke="#05051a" stroke-width="3"/><rect x="-6" y="-4" width="12" height="8" fill="#ffd6cc" stroke="#05051a" stroke-width="2"/></g>
<path d="M270 668 L462 668 L456 692 C450 698 444 697 440 692 C430 705 400 707 389.5 698 C378 707 352 707 342 698 C331 707 301 705 292 692 C288 697 282 698 276 692 Z" fill="url(#gNavy2)" stroke="#05051a" stroke-width="4" stroke-linejoin="round"/>
<path d="M268 653 C300 660 340 663 366 663 C392 663 432 660 464 653 L460 670 C430 676 400 679 366 679 C332 679 302 676 272 670 Z" fill="#ffa9bf" stroke="#05051a" stroke-width="3" stroke-linejoin="round"/>
<path d="M287 659 v13 M306 662 v13 M326 664 v13 M346 665 v13 M386 665 v13 M406 664 v13 M426 662 v13 M445 659 v13 M182 655 l-3 12 M196 663 l-2 12 M550 655 l3 12 M536 663 l2 12" stroke="#05051a" stroke-width="1.6"/>
<path d="M290 464 C276 466 272 478 279 487 C266 494 266 510 275 516 C262 524 264 542 276 548 C274 562 290 570 300 564 C306 576 324 576 332 568 C340 580 356 580 366 574 L366 549 C342 549 312 546 291 536 L307 466 Z" fill="url(#gNavy2)" stroke="#05051a" stroke-width="3" stroke-linejoin="round" />
<path d="M 442 464 C 456 466 460 478 453 487 C 466 494 466 510 457 516 C 470 524 468 542 456 548 C 458 562 442 570 432 564 C 426 576 408 576 400 568 C 392 580 376 580 366 574 L 366 549 C 390 549 420 546 441 536 L 425 466 Z" fill="url(#gNavy2)" stroke="#05051a" stroke-width="3" stroke-linejoin="round" />
<path d="M284 490 l6 2 M278 520 l6 1 M288 552 l4 4 M316 562 l2 5 M346 568 l1 5" fill="none" stroke="#05051a" stroke-width="1.5" stroke-linejoin="round" />
<path d="M 448 490 l -6 2 M 454 520 l -6 1 M 444 552 l -4 4 M 416 562 l -2 5 M 386 568 l -1 5" fill="none" stroke="#05051a" stroke-width="1.5" stroke-linejoin="round" />
<path d="M307 466 L426 466 L442 536 C420 546 390 549 366 549 C342 549 312 546 291 536 Z" fill="url(#gPink)" stroke="#05051a" stroke-width="3" stroke-linejoin="round"/>
<path d="M279 447 C320 460 412 460 453 447 L442 468 C400 478 332 478 290 466 Z" fill="#ffa9bf" stroke="#05051a" stroke-width="3" stroke-linejoin="round"/>
<path d="M300 457 l3 13 M318 460 l2 13 M337 462 l1 13 M395 462 l-1 13 M414 460 l-2 13 M432 457 l-3 13" stroke="#05051a" stroke-width="1.6"/>
<rect x="361" y="462" width="11" height="216" fill="#80b2d8" stroke="#05051a" stroke-width="2.5"/>
<path d="M353 474 L380 474 L382 528 L351 528 Z" fill="#5a82b0" stroke="#05051a" stroke-width="3"/><rect x="361.5" y="498" width="10.5" height="21" fill="#2d4870" stroke="#05051a" stroke-width="2"/>
<path d="M250 622 C236 606 218 600 206 606 C196 618 200 646 212 652 C220 655 230 648 237 641 C222 660 210 680 207 694 C218 699 232 698 240 697 C250 700 266 704 278 704 C276 685 270 660 262 644 C270 652 280 658 284 658 C298 650 306 630 304 614 C290 606 265 610 250 622 Z" fill="url(#gNavy)" stroke="#05051a" stroke-width="3" stroke-linejoin="round" />
<path d="M 482 622 C 496 606 514 600 526 606 C 536 618 532 646 520 652 C 512 655 502 648 495 641 C 510 660 522 680 525 694 C 514 699 500 698 492 697 C 482 700 466 704 454 704 C 456 685 462 660 470 644 C 462 652 452 658 448 658 C 434 650 426 630 428 614 C 442 606 467 610 482 622 Z" fill="url(#gNavy)" stroke="#05051a" stroke-width="3" stroke-linejoin="round" />
<path d="M244 654 C242 670 240 685 240 697" fill="none" stroke="#05051a" stroke-width="3" stroke-linejoin="round" />
<path d="M 488 654 C 490 670 492 685 492 697" fill="none" stroke="#05051a" stroke-width="3" stroke-linejoin="round" />
<path d="M166 250 L566 250 L566 372 C540 425 460 452 366 452 C272 452 192 425 166 372 Z" fill="url(#gFace)" stroke="#05051a" stroke-width="4"/>
<ellipse cx="229" cy="397" rx="42" ry="32" fill="url(#gBlush)"/><ellipse cx="503" cy="397" rx="42" ry="32" fill="url(#gBlush)"/><ellipse cx="366" cy="338" rx="52" ry="36" fill="url(#gBlush)" opacity="0.6"/>
<path d="M344 394 C355 400 376 401 388 395" fill="none" stroke="#05051a" stroke-width="2.2"/>
<path d="M124 255 L127 357 L221 389 C212 360 206 330 200 300 L196 255 Z" fill="url(#gHair)" stroke="#05051a" stroke-width="3" stroke-linejoin="round" />
<path d="M 608 255 L 605 357 L 511 389 C 520 360 526 330 532 300 L 536 255 Z" fill="url(#gHair)" stroke="#05051a" stroke-width="3" stroke-linejoin="round" />
<path d="M186 300 C222 276 290 272 316 292 C318 310 320 330 318 346 C300 372 240 374 214 357 C200 338 190 320 186 300 Z" fill="#ffffff" stroke="#05051a" stroke-width="0.01" stroke-linejoin="round" />
<path d="M 546 300 C 510 276 442 272 416 292 C 414 310 412 330 414 346 C 432 372 492 374 518 357 C 532 338 542 320 546 300 Z" fill="#ffffff" stroke="#05051a" stroke-width="0.01" stroke-linejoin="round" />
<ellipse cx="266.5" cy="331" rx="41.5" ry="44" fill="url(#gIris)" stroke="#05051a" stroke-width="2"/>
<ellipse cx="269.5" cy="326" rx="10" ry="15" fill="#02021a"/>
<ellipse cx="266.5" cy="362" rx="19" ry="10" fill="#dff2f6" opacity="0.9"/>
<circle cx="266.5" cy="294" r="15.5" fill="#fff" stroke="#a5cde2" stroke-width="2.5"/>
<circle cx="238.0" cy="304.5" r="5" fill="#8ec3e0"/>
<ellipse cx="465.5" cy="331" rx="41.5" ry="44" fill="url(#gIris)" stroke="#05051a" stroke-width="2"/>
<ellipse cx="468.5" cy="326" rx="10" ry="15" fill="#02021a"/>
<ellipse cx="465.5" cy="362" rx="19" ry="10" fill="#dff2f6" opacity="0.9"/>
<circle cx="465.5" cy="294" r="15.5" fill="#fff" stroke="#a5cde2" stroke-width="2.5"/>
<circle cx="437.0" cy="304.5" r="5" fill="#8ec3e0"/>
<path d="M172 290 C212 258 286 254 313 293 C282 277 226 278 196 302 C200 325 206 345 220 364 C196 345 186 318 172 290 Z" fill="#05051a" stroke="#05051a" stroke-width="1" stroke-linejoin="round" />
<path d="M 560 290 C 520 258 446 254 419 293 C 450 277 506 278 536 302 C 532 325 526 345 512 364 C 536 345 546 318 560 290 Z" fill="#05051a" stroke="#05051a" stroke-width="1" stroke-linejoin="round" />
<path d="M273 261 C288 265 300 270 309 277" fill="none" stroke="#05051a" stroke-width="1.5" stroke-linejoin="round" />
<path d="M 459 261 C 444 265 432 270 423 277" fill="none" stroke="#05051a" stroke-width="1.5" stroke-linejoin="round" />
<path d="M201 264 C204 200 214 150 246 127 C290 96 330 90 366 90 C402 90 442 96 486 127 C518 150 528 200 531 264 C500 259 470 258 452 258 L425 257 L308 257 L279 258 C260 258 230 260 201 264 Z" fill="url(#gBang)" stroke="#05051a" stroke-width="4" stroke-linejoin="round"/>
<path d="M311 157 C298 185 286 225 279 259 L308 259 C300 225 302 190 311 157 Z" fill="#ffe8dc" stroke="#05051a" stroke-width="3" stroke-linejoin="round" />
<path d="M 421 157 C 434 185 446 225 453 259 L 424 259 C 432 225 430 190 421 157 Z" fill="#ffe8dc" stroke="#05051a" stroke-width="3" stroke-linejoin="round" />
<ellipse cx="252" cy="216" rx="18" ry="8.5" transform="rotate(-40 252 216)" fill="none" stroke="#1e2c48" stroke-width="1.6"/><ellipse cx="480" cy="216" rx="18" ry="8.5" transform="rotate(40 480 216)" fill="none" stroke="#1e2c48" stroke-width="1.6"/>
<path d="M246 127 C280 92 308 62 331 41 C346 56 360 76 366 90 C330 90 290 96 246 127 Z" fill="url(#gNavy)" stroke="#05051a" stroke-width="3.5" stroke-linejoin="round" />
<path d="M 486 127 C 452 92 424 62 401 41 C 386 56 372 76 366 90 C 402 90 442 96 486 127 Z" fill="url(#gNavy)" stroke="#05051a" stroke-width="3.5" stroke-linejoin="round" />
<path d="M152 120 C205 152 300 168 400 160 C440 156 460 150 473 144 C420 136 330 126 283 106 C250 90 226 72 212 55 C180 76 162 98 152 120 Z" fill="url(#gShine)" opacity="0.85"/>
<path d="M200 153 L178 178 M532 153 L554 178" stroke="#1e2c48" stroke-width="1"/>
<path d="M140 160 L162 160 L140 276 L118 276 Z" fill="#05051a" stroke="#05051a" stroke-width="7" stroke-linejoin="round"/>
<path d="M189 160 L210 160 L186 276 L165 276 Z" fill="#05051a" stroke="#05051a" stroke-width="7" stroke-linejoin="round"/>
<path d="M114 183 L220 183 L216 205 L110 205 Z" fill="#05051a" stroke="#05051a" stroke-width="7" stroke-linejoin="round"/>
<path d="M108 232 L213 232 L209 255 L104 255 Z" fill="#05051a" stroke="#05051a" stroke-width="7" stroke-linejoin="round"/>
<g><path d="M140 160 L162 160 L140 276 L118 276 Z" fill="url(#gClipU)"/><path d="M189 160 L210 160 L186 276 L165 276 Z" fill="url(#gClipU)"/><path d="M114 183 L220 183 L216 205 L110 205 Z" fill="url(#gClipU)"/><path d="M108 232 L213 232 L209 255 L104 255 Z" fill="url(#gClipU)"/></g>
<g transform="translate(570 210) rotate(-30)">
<path d="M-41 -41 L-14 -41 A17 17 0 1 0 14 -41 L41 -41 L41 -10 A19 19 0 1 1 41 10 L41 41 L10 41 A19 19 0 1 1 -10 41 L-41 41 L-41 10 A19 19 0 1 1 -41 -10 Z" fill="url(#gClip)" stroke="#05051a" stroke-width="4" stroke-linejoin="round"/>
</g>
</g></svg>
<div class="t" style="left:211px;top:182.6px;font-size:28px;color:#e8e8e8;width:469.0px;text-align:justify;text-align-last:justify;letter-spacing:-1.48px">step0.svg @ 93.92 % (RGB/プレビュー)</div>
<svg style="left:714px;top:186px" width="24" height="24" viewBox="0 0 24 24"><path d="M3 3 L21 21 M21 3 L3 21" stroke="#d0d0d0" stroke-width="3"/></svg>
<div class="a" style="left:185px;top:233px;width:2199px;height:3px;background:#222;"></div>
<svg style="left:2352px;top:249px" width="24" height="16" viewBox="0 0 24 16"><path d="M2 13 L12 3 L22 13" fill="none" stroke="#6a6a6a" stroke-width="3.5"/></svg>
<div class="a" style="left:2345px;top:1081px;width:39px;height:63px;background:#3e3e3e;border-radius:19.5px"></div>
<svg style="left:2352px;top:1965px" width="24" height="16" viewBox="0 0 24 16"><path d="M2 3 L12 13 L22 3" fill="none" stroke="#6a6a6a" stroke-width="3.5"/></svg>
<div class="a" style="left:185px;top:1934px;width:2159px;height:2px;background:#2a2a2a;"></div>
<svg style="left:196px;top:1946px" width="38" height="38" viewBox="0 0 38 38"><circle cx="19" cy="19" r="18" fill="#c0c0c0"/><text x="19" y="29" font-size="28" font-weight="bold" text-anchor="middle" fill="#323232" font-family="Liberation Sans">?</text></svg>
<div class="t" style="left:261px;top:1948.6px;font-size:28px;color:#9a9a9a;width:274.0px;text-align:justify;text-align-last:justify;letter-spacing:-4.21px">選択するオブジェクトを</div>
<div class="t" style="left:536px;top:1948.6px;font-size:28px;color:#b0b0b0;font-weight:bold;width:98.0px;text-align:justify;text-align-last:justify;letter-spacing:-4.80px">クリック</div>
<div class="t" style="left:655px;top:1948.6px;font-size:28px;color:#9a9a9a;">|</div>
<div class="t" style="left:680px;top:1948.6px;font-size:28px;color:#b0b0b0;font-weight:bold;width:368.0px;text-align:justify;text-align-last:justify;letter-spacing:-2.97px">Shift キーを押しながらクリック</div>
<div class="t" style="left:1050px;top:1948.6px;font-size:28px;color:#9a9a9a;width:350.0px;text-align:justify;text-align-last:justify;letter-spacing:-4.01px">して複数のオブジェクトを選択</div>
<div class="t" style="left:1421px;top:1948.6px;font-size:28px;color:#9a9a9a;">|</div>
<div class="t" style="left:1446px;top:1948.6px;font-size:28px;color:#9a9a9a;width:272.0px;text-align:justify;text-align-last:justify;letter-spacing:-4.39px">複製するオブジェクトを</div>
<div class="t" style="left:1730px;top:1948.6px;font-size:28px;color:#b0b0b0;font-weight:bold;width:344.0px;text-align:justify;text-align-last:justify;letter-spacing:-3.24px">Alt キーを押しながらドラッグ</div>
<div class="a" style="left:195px;top:1997px;width:171px;height:41px;background:#262626;border:2px solid #2e2e2e;border-bottom:none;border-radius:5px 5px 0 0;box-sizing:border-box"></div>
<div class="a" style="left:320px;top:1999px;width:2px;height:39px;background:#323232;"></div>
<div class="t" style="left:200px;top:2005.5px;font-size:30px;color:#e0e0e0;">46.96%</div>
<svg style="left:330px;top:2015px" width="22" height="14" viewBox="0 0 22 14"><path d="M2 2 L11 11 L20 2" fill="none" stroke="#c8c8c8" stroke-width="3"/></svg>
<div class="a" style="left:376px;top:1997px;width:173px;height:41px;background:#262626;border:2px solid #2e2e2e;border-bottom:none;border-radius:5px 5px 0 0;box-sizing:border-box"></div>
<div class="a" style="left:503px;top:1999px;width:2px;height:39px;background:#323232;"></div>
<div class="t" style="left:382px;top:2005.5px;font-size:30px;color:#e0e0e0;">0°</div>
<svg style="left:512px;top:2015px" width="22" height="14" viewBox="0 0 22 14"><path d="M2 2 L11 11 L20 2" fill="none" stroke="#c8c8c8" stroke-width="3"/></svg>
<svg style="left:568px;top:2005px" width="24" height="24" viewBox="0 0 24 24"><rect x="1" y="2" width="4" height="20" fill="#5e5e5e"/><path d="M22 2 V22 L8 12 Z" fill="#5e5e5e"/></svg>
<svg style="left:614px;top:2005px" width="16" height="24" viewBox="0 0 16 24"><path d="M14 2 V22 L2 12 Z" fill="#5e5e5e"/></svg>
<div class="a" style="left:651px;top:1997px;width:148px;height:41px;background:#262626;border:2px solid #2e2e2e;border-bottom:none;border-radius:5px 5px 0 0;box-sizing:border-box"></div>
<div class="a" style="left:754px;top:1999px;width:2px;height:39px;background:#323232;"></div>
<div class="t" style="left:658px;top:2007.5px;font-size:30px;color:#e0e0e0;">1</div>
<svg style="left:763px;top:2015px" width="22" height="14" viewBox="0 0 22 14"><path d="M2 2 L11 11 L20 2" fill="none" stroke="#c8c8c8" stroke-width="3"/></svg>
<svg style="left:822px;top:2005px" width="16" height="24" viewBox="0 0 16 24"><path d="M2 2 V22 L14 12 Z" fill="#5e5e5e"/></svg>
<svg style="left:858px;top:2005px" width="24" height="24" viewBox="0 0 24 24"><path d="M2 2 V22 L16 12 Z" fill="#5e5e5e"/><rect x="19" y="2" width="4" height="20" fill="#5e5e5e"/></svg>
<div class="a" style="left:902px;top:1999px;width:2px;height:39px;background:#2a2a2a;"></div>
<div class="t" style="left:1127px;top:2004.6px;font-size:28px;color:#a8a8a8;;width:56.0px;text-align:justify;text-align-last:justify;letter-spacing:-0.30px">選択</div>
<div class="a" style="left:1401px;top:1999px;width:2px;height:39px;background:#2a2a2a;"></div>
<svg style="left:1417px;top:2008px" width="16" height="22" viewBox="0 0 16 22"><path d="M2 1 V21 L14 11 Z" fill="#d0d0d0"/></svg>
<svg style="left:1461px;top:2006px" width="14" height="24" viewBox="0 0 14 24"><path d="M12 2 L2 12 L12 22" fill="none" stroke="#a0a0a0" stroke-width="3"/></svg>
<div class="a" style="left:1845px;top:1999px;width:62px;height:39px;background:#3e3e3e;border-radius:19.5px"></div>
<svg style="left:2314px;top:2006px" width="14" height="24" viewBox="0 0 14 24"><path d="M2 2 L12 12 L2 22" fill="none" stroke="#a0a0a0" stroke-width="3"/></svg>
<div class="a" style="left:1449px;top:1844px;width:893px;height:90px;background:#323232;border:2px solid #222;border-radius:10px;box-sizing:border-box"></div>
<div class="a" style="left:1464px;top:1855px;width:9px;height:67px;background:#b0b0b0;border-radius:5px"></div>
<div class="a" style="left:1498px;top:1854px;width:269px;height:70px;background:transparent;border:2px solid #4a4a4a;border-radius:5px;box-sizing:border-box"></div>
<svg style="left:1527px;top:1868px" width="44" height="44" viewBox="0 0 44 44"><path d="M9 28 L26 11 L33 18 L16 35 L2 40 Z" fill="#c8c8c8"/><path d="M4 38 L7 30 L12 35 Z" fill="#323232"/><path d="M28 9 L34 3 Q36 1.5 38 3 L42 7 Q43.5 9 42 11 L36 16 Z" fill="#c8c8c8"/></svg>
<div class="t" style="left:1588px;top:1873.4px;font-size:32px;color:#e8e8e8;;width:158.2px;text-align:justify;text-align-last:justify;letter-spacing:-0.30px">描画 (鉛筆)</div>
<div class="a" style="left:1778px;top:1854px;width:394px;height:70px;background:transparent;border:2px solid #4a4a4a;border-radius:5px;box-sizing:border-box"></div>
<svg style="left:1794px;top:1862px" width="52" height="52" viewBox="0 0 52 52"><path d="M11.5 27 V40 Q11.5 44.5 16 44.5 H37 Q41.5 44.5 41.5 40 V28" fill="none" stroke="#c8c8c8" stroke-width="5"/><path d="M42.5 4.8 L41.7 14.2 L49.4 19.5 L40.0 18.7 L34.7 26.4 L35.5 17.0 L27.8 11.7 L37.2 12.5 Z" fill="#c8c8c8"/><path d="M27.0 27.4 L26.6 33.1 L31.2 36.4 L25.5 36.0 L22.2 40.6 L22.6 34.9 L18.0 31.6 L23.7 32.0 Z" fill="#c8c8c8"/><circle cx="12.4" cy="13.8" r="8.7" fill="#2d8ceb"/></svg>
<div class="t" style="left:1857px;top:1873.4px;font-size:32px;color:#e8e8e8;;width:291.0px;text-align:justify;text-align-last:justify;letter-spacing:-0.30px">生成ベクター (Beta)</div>
<svg style="left:2192px;top:1869px" width="42" height="42" viewBox="0 0 42 42"><path d="M3 5 H36 V20 M3 5 V36 H18" fill="none" stroke="#c8c8c8" stroke-width="3.5"/><path d="M6 33 L14 22 L20 28 L24 24" fill="none" stroke="#c8c8c8" stroke-width="3.5"/><circle cx="28" cy="12" r="3" fill="#c8c8c8"/><circle cx="30" cy="31" r="10" fill="#c8c8c8"/><path d="M30 25 V37 M24 31 H36" stroke="#323232" stroke-width="3"/></svg>
<svg style="left:2265px;top:1879px" width="46" height="16" viewBox="0 0 46 16"><circle cx="6" cy="8" r="5.5" fill="#c8c8c8"/><circle cx="23" cy="8" r="5.5" fill="#c8c8c8"/><circle cx="40" cy="8" r="5.5" fill="#c8c8c8"/></svg>
<svg style="left:2453px;top:169px" width="20" height="14" viewBox="0 0 20 14"><path d="M8 1 L1.5 7 L8 13 M18 1 L11.5 7 L18 13" fill="none" stroke="#a8a8a8" stroke-width="2"/></svg>
<svg style="left:3173px;top:169px" width="20" height="14" viewBox="0 0 20 14"><path d="M2 1 L8.5 7 L2 13 M12 1 L18.5 7 L12 13" fill="none" stroke="#a8a8a8" stroke-width="2"/></svg>
<svg style="left:3805px;top:169px" width="20" height="14" viewBox="0 0 20 14"><path d="M2 1 L8.5 7 L2 13 M12 1 L18.5 7 L12 13" fill="none" stroke="#a8a8a8" stroke-width="2"/></svg>
<div class="a" style="left:2415px;top:200px;width:48px;height:10px;background:repeating-linear-gradient(90deg,#1a1a1a 0 2px,transparent 2px 4.8px);"></div>
<div class="a" style="left:2415px;top:373px;width:48px;height:10px;background:repeating-linear-gradient(90deg,#1a1a1a 0 2px,transparent 2px 4.8px);"></div>
<div class="a" style="left:2415px;top:615px;width:48px;height:10px;background:repeating-linear-gradient(90deg,#1a1a1a 0 2px,transparent 2px 4.8px);"></div>
<div class="a" style="left:2415px;top:857px;width:48px;height:10px;background:repeating-linear-gradient(90deg,#1a1a1a 0 2px,transparent 2px 4.8px);"></div>
<svg style="left:2415px;top:231px" width="48" height="38" viewBox="0 0 48 38"><path d="M24 2 C40 2 47 10 47 19 C47 30 36 36 24 36 C10 36 1 30 1 23 C1 15 8 13 14 14 C20 15 20 10 18 7 C17 4 19 2 24 2 Z" fill="#b8b8b8"/><circle cx="9" cy="25" r="4" fill="#323232"/><circle cx="18" cy="29" r="4" fill="#323232"/><circle cx="28" cy="28" r="3.6" fill="#323232"/><circle cx="36" cy="22" r="3.3" fill="#323232"/><circle cx="37" cy="13" r="3" fill="#323232"/></svg>
<svg style="left:2417px;top:299px" width="44" height="44" viewBox="0 0 44 44"><defs><clipPath id="pq"><path d="M3 3 A38 38 0 0 1 41 41 L3 41 Z"/></clipPath></defs><g clip-path="url(#pq)"><path d="M3 41 L3 0 L14 0 Z" fill="#222"/><path d="M3 41 L14 0 L28 4 Z" fill="#555"/><path d="M3 41 L28 4 L40 14 Z" fill="#777"/><path d="M3 41 L40 14 L46 26 Z" fill="#999"/><path d="M3 41 L46 26 L46 36 Z" fill="#bbb"/><path d="M3 41 L46 36 L46 44 Z" fill="#e6e6e6"/></g><path d="M3 3 A38 38 0 0 1 41 41 L3 41 Z" fill="none" stroke="#b8b8b8" stroke-width="3"/></svg>
<svg style="left:2418px;top:406px" width="42" height="34" viewBox="0 0 42 34"><rect x="1.5" y="1.5" width="39" height="31" fill="#b8b8b8"/><rect x="5" y="5" width="9" height="11" fill="#6a6a6a"/><rect x="17" y="5" width="8" height="11" fill="#9a9a9a"/><rect x="28" y="5" width="9" height="11" fill="#6a6a6a"/><rect x="5" y="19" width="9" height="10" fill="#6a6a6a"/><rect x="17" y="19" width="8" height="10" fill="#6a6a6a"/><rect x="28" y="19" width="9" height="10" fill="#6a6a6a"/></svg>
<svg style="left:2419px;top:467px" width="40" height="50" viewBox="0 0 40 50"><rect x="10" y="30" width="20" height="18" rx="2" fill="#b8b8b8"/><path d="M17 31 L18 5 L23 5 L22 31 Z M13 31 C10 22 2 20 1 14 C6 14 12 20 15 31 Z M25 31 C28 22 32 16 39 17 C36 22 30 24 27 31 Z" fill="#b8b8b8"/><rect x="15" y="1" width="9" height="9" fill="#b8b8b8"/></svg>
<svg style="left:2419px;top:541px" width="40" height="42" viewBox="0 0 40 42"><circle cx="20" cy="11" r="9.5" fill="#b8b8b8"/><circle cx="10" cy="23" r="9.5" fill="#b8b8b8"/><circle cx="30" cy="23" r="9.5" fill="#b8b8b8"/><path d="M18 22 L16 38 L8 40 L32 40 L24 38 L22 22 Z" fill="#b8b8b8"/></svg>
<svg style="left:2417px;top:650px" width="44" height="30" viewBox="0 0 44 30"><rect x="1" y="1" width="42" height="3" fill="#b8b8b8"/><rect x="1" y="10" width="42" height="5" fill="#b8b8b8"/><rect x="1" y="21" width="42" height="8" fill="#b8b8b8"/></svg>
<svg style="left:2417px;top:719px" width="44" height="32" viewBox="0 0 44 32"><defs><linearGradient id="rg" x1="0" x2="1"><stop offset="0" stop-color="#222"/><stop offset="1" stop-color="#e0e0e0"/></linearGradient></defs><rect x="1.5" y="1.5" width="41" height="29" fill="url(#rg)" stroke="#b8b8b8" stroke-width="3"/></svg>
<svg style="left:2417px;top:786px" width="44" height="44" viewBox="0 0 44 44"><circle cx="16" cy="16" r="14" fill="#b8b8b8"/><circle cx="27" cy="27" r="14" fill="#6a6a6a" stroke="#b8b8b8" stroke-width="3"/></svg>
<svg style="left:2423px;top:892px" width="32" height="32" viewBox="0 0 32 32"><path d="M3 1 L31 16 L3 31 Z" fill="#b8b8b8"/></svg>
<svg style="left:2415px;top:965px" width="48" height="24" viewBox="0 0 48 24"><rect x="2.5" y="4" width="26" height="16" rx="8" fill="none" stroke="#b8b8b8" stroke-width="4.5"/><rect x="19.5" y="4" width="26" height="16" rx="8" fill="none" stroke="#b8b8b8" stroke-width="4.5"/></svg>
<div class="a" style="left:2492px;top:192px;width:713px;height:67px;background:#282828;"></div>
<div class="a" style="left:2492px;top:192px;width:138px;height:67px;background:#323232;"></div>
<div class="a" style="left:2892px;top:196px;width:2px;height:63px;background:#323232;"></div>
<div class="a" style="left:3078px;top:196px;width:2px;height:63px;background:#323232;"></div>
<div class="t" style="left:2519px;top:210.6px;font-size:28px;color:#e8e8e8;width:91.0px;text-align:justify;text-align-last:justify;letter-spacing:-6.30px">レイヤー</div>
<div class="t" style="left:2655px;top:210.6px;font-size:28px;color:#a0a0a0;width:219.0px;text-align:justify;text-align-last:justify;letter-spacing:-4.74px">アセットの書き出し</div>
<div class="t" style="left:2920px;top:210.6px;font-size:28px;color:#a0a0a0;width:141.0px;text-align:justify;text-align-last:justify;letter-spacing:-5.47px">アートボード</div>
<svg style="left:3164px;top:215px" width="28" height="24" viewBox="0 0 28 24"><rect x="0" y="2" width="28" height="3" fill="#a8a8a8"/><rect x="0" y="10.5" width="28" height="3" fill="#a8a8a8"/><rect x="0" y="19" width="28" height="3" fill="#a8a8a8"/></svg>
<div class="a" style="left:2506px;top:276px;width:685px;height:84px;background:#323232;border:2px solid #2c2c2c;border-bottom:none;border-radius:6px 6px 0 0;box-sizing:border-box"></div>
<div class="a" style="left:2521px;top:286px;width:597px;height:57px;background:#1f1f1f;border:2px solid #2d2d2d;border-radius:6px;box-sizing:border-box"></div>
<svg style="left:2535px;top:299px" width="32" height="32" viewBox="0 0 32 32"><circle cx="13" cy="13" r="9.5" fill="none" stroke="#b8b8b8" stroke-width="3.5"/><path d="M20 20 L29 29" stroke="#b8b8b8" stroke-width="4.5" stroke-linecap="round"/></svg>
<div class="t" style="left:2590px;top:298.5px;font-size:30px;color:#6a6a6a;;width:184.0px;text-align:justify;text-align-last:justify;letter-spacing:-0.30px">すべてを検索</div>
<svg style="left:3143px;top:297px" width="36" height="36" viewBox="0 0 36 36"><path d="M1 1 H35 L22 16 V35 L14 28 V16 Z" fill="#b8b8b8"/></svg>
<div class="a" style="left:2505px;top:362px;width:687px;height:702px;background:#323232;border:2px solid #3a3a3a;border-radius:6px;box-sizing:border-box"></div>
<div class="a" style="left:2507px;top:367px;width:683px;height:50px;background:#374b63;"></div>
<svg style="left:2514px;top:379px" width="34" height="22" viewBox="0 0 34 22"><path d="M1 11 Q17 -9 33 11 Q17 31 1 11 Z" fill="#b8b8b8"/><circle cx="17" cy="11" r="5.8" fill="none" stroke="#374b63" stroke-width="2.8"/><circle cx="19" cy="9" r="2" fill="#374b63"/></svg>
<div class="a" style="left:2557px;top:369px;width:2px;height:46px;background:#2e2e2e;"></div>
<div class="a" style="left:2610px;top:369px;width:2px;height:46px;background:#2e2e2e;"></div>
<div class="a" style="left:2614px;top:369px;width:8px;height:45px;background:#4f7dff;"></div>
<div class="a" style="left:2625px;top:369px;width:2px;height:46px;background:#2e2e2e;"></div>
<svg style="left:2641px;top:380px" width="14" height="22" viewBox="0 0 14 22"><path d="M2 2 L11 11 L2 20" fill="none" stroke="#d0d0d0" stroke-width="3"/></svg>
<div class="a" style="left:2687px;top:370px;width:45px;height:45px;background:#fff;border:3px solid #000;box-sizing:border-box"></div>
<svg style="left:2690px;top:373px" width="39" height="39" viewBox="0 0 39 39"><use href="#ch" transform="translate(1.5 0) scale(0.04924)"/></svg>
<div class="t" style="left:2748px;top:375.5px;font-size:30px;color:#e0e0e0;;width:148.0px;text-align:justify;text-align-last:justify;letter-spacing:-0.30px">レイヤー 1</div>
<div class="a" style="left:3099px;top:369px;width:2px;height:46px;background:#2e2e2e;"></div>
<svg style="left:3116px;top:380px" width="22" height="22" viewBox="0 0 22 22"><circle cx="11" cy="11" r="8.5" fill="none" stroke="#d0d0d0" stroke-width="2.5"/></svg>
<svg style="left:3176px;top:367px" width="14" height="14" viewBox="0 0 14 14"><path d="M0 0 H14 V14 Z" fill="#b0b0b0"/></svg>
<div class="t" style="left:2506px;top:1073.5px;font-size:30px;color:#a8a8a8;;width:148.0px;text-align:justify;text-align-last:justify;letter-spacing:-0.30px">1 レイヤー</div>
<svg style="left:2720px;top:1070px" width="38" height="38" viewBox="0 0 38 38"><path d="M5 5 H31 M5 5 V33 M31 5 V20 M5 33 H22" fill="none" stroke="#b8b8b8" stroke-width="3"/><circle cx="5" cy="5" r="3" fill="#b8b8b8"/><circle cx="31" cy="5" r="3" fill="#b8b8b8"/><circle cx="5" cy="33" r="3" fill="#b8b8b8"/><path d="M24 22 H36 V38 L30 33 L24 38 Z" fill="#b8b8b8"/></svg>
<svg style="left:2779px;top:1070px" width="38" height="38" viewBox="0 0 38 38"><path d="M16 8 H4 V34 H30 V22" fill="none" stroke="#b8b8b8" stroke-width="3"/><path d="M20 18 L34 4 M24 4 H34 V14" fill="none" stroke="#b8b8b8" stroke-width="3"/></svg>
<svg style="left:2843px;top:1070px" width="38" height="38" viewBox="0 0 38 38"><circle cx="15" cy="15" r="10" fill="none" stroke="#6a6a6a" stroke-width="3"/><path d="M22 22 L32 32" stroke="#6a6a6a" stroke-width="4.5" stroke-linecap="round"/></svg>
<svg style="left:2907px;top:1070px" width="38" height="38" viewBox="0 0 38 38"><rect x="10" y="10" width="22" height="22" fill="none" stroke="#b8b8b8" stroke-width="3"/><rect x="3" y="3" width="20" height="20" fill="#323232" stroke="#b8b8b8" stroke-width="3"/><rect x="10" y="10" width="13" height="13" fill="#b8b8b8"/></svg>
<svg style="left:2970px;top:1070px" width="42" height="38" viewBox="0 0 42 38"><path d="M3 2 V13 H12 M8 9 L12 13 L8 17" fill="none" stroke="#b8b8b8" stroke-width="3"/><rect x="15" y="8" width="24" height="26" fill="none" stroke="#b8b8b8" stroke-width="3"/><path d="M27 14 V28 M20 21 H34" stroke="#b8b8b8" stroke-width="3"/></svg>
<svg style="left:3040px;top:1070px" width="38" height="38" viewBox="0 0 38 38"><rect x="4" y="5" width="28" height="28" fill="none" stroke="#b8b8b8" stroke-width="3"/><path d="M18 11 V27 M10 19 H26" stroke="#b8b8b8" stroke-width="3"/></svg>
<svg style="left:3102px;top:1068px" width="38" height="40" viewBox="0 0 38 40"><path d="M5 8 H33 M14 8 V3 H24 V8 M8 8 L10 37 H28 L30 8 M15 14 V31 M19 14 V31 M23 14 V31" fill="none" stroke="#5a5a5a" stroke-width="3"/></svg>
<div class="a" style="left:2492px;top:1119px;width:713px;height:68px;background:#282828;"></div>
<div class="a" style="left:2492px;top:1119px;width:176px;height:68px;background:#323232;"></div>
<div class="a" style="left:2918px;top:1123px;width:2px;height:64px;background:#323232;"></div>
<div class="t" style="left:2519px;top:1136.6px;font-size:28px;color:#e8e8e8;width:132.0px;text-align:justify;text-align-last:justify;letter-spacing:-7.30px">アピアランス</div>
<div class="t" style="left:2693px;top:1136.6px;font-size:28px;color:#a0a0a0;width:207.0px;text-align:justify;text-align-last:justify;letter-spacing:-8.60px">グラフィックスタイル</div>
<svg style="left:3164px;top:1141px" width="28" height="24" viewBox="0 0 28 24"><rect x="0" y="2" width="28" height="3" fill="#a8a8a8"/><rect x="0" y="10.5" width="28" height="3" fill="#a8a8a8"/><rect x="0" y="19" width="28" height="3" fill="#a8a8a8"/></svg>
<div class="a" style="left:2506px;top:1203px;width:685px;height:785px;background:#323232;border:2px solid #3a3a3a;border-radius:6px;box-sizing:border-box"></div>
<div class="a" style="left:2512px;top:1211px;width:50px;height:50px;background:#fff;border:3px solid #111;box-sizing:border-box"></div>
<div class="a" style="left:2517px;top:1215px;width:16px;height:16px;background:transparent;border:1.5px solid #333;box-sizing:border-box"></div>
<div class="t" style="left:2633px;top:1220.5px;font-size:30px;color:#e8e8e8;font-weight:bold;width:122.0px;text-align:justify;text-align-last:justify;letter-spacing:-0.30px">選択なし</div>
<div class="a" style="left:2508px;top:1267px;width:681px;height:3px;background:#2a2a2a;"></div>
<div class="a" style="left:2508px;top:1329px;width:681px;height:3px;background:#2a2a2a;"></div>
<div class="a" style="left:2508px;top:1391px;width:681px;height:3px;background:#2a2a2a;"></div>
<div class="a" style="left:2508px;top:1453px;width:681px;height:3px;background:#2a2a2a;"></div>
<div class="a" style="left:2567px;top:1270px;width:3px;height:183px;background:#2a2a2a;"></div>
<svg style="left:2518px;top:1288px" width="34" height="22" viewBox="0 0 34 22"><path d="M1 11 Q17 -9 33 11 Q17 31 1 11 Z" fill="#b8b8b8"/><circle cx="17" cy="11" r="5.8" fill="none" stroke="#323232" stroke-width="2.8"/><circle cx="19" cy="9" r="2" fill="#323232"/></svg>
<svg style="left:2518px;top:1351px" width="34" height="22" viewBox="0 0 34 22"><path d="M1 11 Q17 -9 33 11 Q17 31 1 11 Z" fill="#b8b8b8"/><circle cx="17" cy="11" r="5.8" fill="none" stroke="#323232" stroke-width="2.8"/><circle cx="19" cy="9" r="2" fill="#323232"/></svg>
<svg style="left:2518px;top:1413px" width="34" height="22" viewBox="0 0 34 22"><path d="M1 11 Q17 -9 33 11 Q17 31 1 11 Z" fill="#5e5e5e"/><circle cx="17" cy="11" r="5.8" fill="none" stroke="#323232" stroke-width="2.8"/><circle cx="19" cy="9" r="2" fill="#323232"/></svg>
<svg style="left:2584px;top:1286px" width="14" height="22" viewBox="0 0 14 22"><path d="M2 2 L11 11 L2 20" fill="none" stroke="#c8c8c8" stroke-width="3"/></svg>
<svg style="left:2584px;top:1349px" width="14" height="22" viewBox="0 0 14 22"><path d="M2 2 L11 11 L2 20" fill="none" stroke="#c8c8c8" stroke-width="3"/></svg>
<div class="t" style="left:2633px;top:1283.5px;font-size:30px;color:#d8d8d8;width:52.0px;text-align:justify;text-align-last:justify;letter-spacing:-4.30px">線：</div>
<div class="a" style="left:2633px;top:1316px;width:52px;height:2px;background:repeating-linear-gradient(90deg,#8a8a8a 0 2px,transparent 2px 4px);"></div>
<div class="a" style="left:2738px;top:1278px;width:43px;height:43px;background:#231816;border:3px solid #fff;outline:2px solid #111;box-sizing:border-box"></div>
<div class="a" style="left:2741px;top:1281px;width:37px;height:37px;background:transparent;border:3px solid #000;box-sizing:border-box"></div>
<div class="t" style="left:2818px;top:1283.5px;font-size:30px;color:#d8d8d8;width:137.0px;text-align:justify;text-align-last:justify;letter-spacing:0.00px">3 pt&nbsp;&nbsp;外側</div>
<div class="t" style="left:2633px;top:1345.5px;font-size:30px;color:#d8d8d8;width:80.0px;text-align:justify;text-align-last:justify;letter-spacing:-3.97px">塗り：</div>
<svg style="left:2737px;top:1339px" width="45" height="45" viewBox="0 0 45 45"><rect x="1.5" y="1.5" width="42" height="42" fill="#111"/><rect x="4" y="4" width="37" height="37" fill="#fff"/><rect x="7" y="7" width="31" height="31" fill="none" stroke="#000" stroke-width="2"/><path d="M9 36 L36 9" stroke="#d0021b" stroke-width="5"/></svg>
<div class="t" style="left:2633px;top:1407.5px;font-size:30px;color:#d8d8d8;width:142.0px;text-align:justify;text-align-last:justify;letter-spacing:-1.90px">不透明度：</div>
<div class="a" style="left:2633px;top:1440px;width:143px;height:2px;background:repeating-linear-gradient(90deg,#8a8a8a 0 2px,transparent 2px 4px);"></div>
<div class="t" style="left:2825px;top:1407.5px;font-size:30px;color:#d8d8d8;;width:120.0px;text-align:justify;text-align-last:justify;letter-spacing:-0.30px">初期設定</div>
<svg style="left:2520px;top:1997px" width="32" height="32" viewBox="0 0 32 32"><rect x="3" y="3" width="26" height="26" fill="none" stroke="#b8b8b8" stroke-width="5"/></svg>
<svg style="left:2585px;top:1997px" width="32" height="32" viewBox="0 0 32 32"><rect x="2.5" y="2.5" width="27" height="27" fill="none" stroke="#b8b8b8" stroke-width="3"/><rect x="7" y="7" width="18" height="18" fill="#b8b8b8"/></svg>
<div class="t" style="left:2651px;top:1994.3px;font-size:34px;color:#b8b8b8;font-family:'Liberation Serif',serif"><i>fx</i></div>
<svg style="left:2678px;top:2019px" width="10" height="7" viewBox="0 0 10 7"><path d="M0 0 H10 L5 6 Z" fill="#b8b8b8"/></svg>
<svg style="left:2975px;top:1997px" width="32" height="32" viewBox="0 0 32 32"><circle cx="16" cy="16" r="12.5" fill="none" stroke="#b8b8b8" stroke-width="4.5"/><path d="M7 7 L25 25" stroke="#b8b8b8" stroke-width="4.5"/></svg>
<svg style="left:3041px;top:1997px" width="32" height="32" viewBox="0 0 32 32"><rect x="3" y="3" width="26" height="26" fill="none" stroke="#5a5a5a" stroke-width="2.5"/><path d="M16 9 V23 M9 16 H23" stroke="#5a5a5a" stroke-width="2.5"/></svg>
<svg style="left:3103px;top:1995px" width="34" height="36" viewBox="0 0 34 36"><path d="M4 7 H30 M12 7 V3 H22 V7 M7 7 L9 33 H25 L27 7 M13 12 V28 M17 12 V28 M21 12 V28" fill="none" stroke="#5a5a5a" stroke-width="2.5"/></svg>
<div class="a" style="left:3212px;top:192px;width:625px;height:68px;background:#282828;"></div>
<div class="a" style="left:3212px;top:192px;width:153px;height:68px;background:#323232;"></div>
<div class="a" style="left:3557px;top:196px;width:2px;height:64px;background:#323232;"></div>
<div class="t" style="left:3237px;top:210.6px;font-size:28px;color:#e8e8e8;width:108.0px;text-align:justify;text-align-last:justify;letter-spacing:-7.70px">プロパティ</div>
<div class="t" style="left:3390px;top:210.6px;font-size:28px;color:#a0a0a0;width:154.0px;text-align:justify;text-align-last:justify;letter-spacing:-5.20px">CC ライブラリ</div>
<div class="t" style="left:3237px;top:285.5px;font-size:30px;color:#a8a8a8;;width:122.0px;text-align:justify;text-align-last:justify;letter-spacing:-0.30px">選択なし</div>
<div class="a" style="left:3212px;top:341px;width:594px;height:3px;background:#2a2a2a;"></div>
<div class="a" style="left:3212px;top:671px;width:594px;height:3px;background:#2a2a2a;"></div>
<div class="a" style="left:3212px;top:767px;width:594px;height:3px;background:#2a2a2a;"></div>
<div class="a" style="left:3212px;top:862px;width:594px;height:3px;background:#2a2a2a;"></div>
<div class="a" style="left:3212px;top:957px;width:594px;height:3px;background:#2a2a2a;"></div>
<div class="a" style="left:3212px;top:1329px;width:594px;height:3px;background:#2a2a2a;"></div>
<div class="t" style="left:3239px;top:377.5px;font-size:30px;color:#a8a8a8;width:177.0px;text-align:justify;text-align-last:justify;letter-spacing:-1.80px">ドキュメント</div>
<div class="t" style="right:426px;top:449.5px;font-size:30px;color:#a8a8a8;width:78.0px;text-align:justify;text-align-last:justify;letter-spacing:-4.30px">単位：</div>
<div class="a" style="left:3428px;top:440px;width:343px;height:51px;background:#252525;border:2px solid #2e2e2e;border-radius:5px;box-sizing:border-box"></div>
<div class="t" style="left:3447px;top:449.5px;font-size:30px;color:#e0e0e0;width:117.0px;text-align:justify;text-align-last:justify;letter-spacing:-2.05px">ピクセル</div>
<svg style="left:3738px;top:459px" width="22" height="14" viewBox="0 0 22 14"><path d="M2 2 L11 11 L20 2" fill="none" stroke="#c8c8c8" stroke-width="3"/></svg>
<div class="t" style="right:426px;top:521.5px;font-size:30px;color:#a8a8a8;width:199.0px;text-align:justify;text-align-last:justify;letter-spacing:-2.44px">アートボード：</div>
<div class="a" style="left:3428px;top:513px;width:186px;height:51px;background:#252525;border:2px solid #2e2e2e;border-radius:5px;box-sizing:border-box"></div>
<div class="a" style="left:3568px;top:515px;width:2px;height:47px;background:#323232;"></div>
<div class="t" style="left:3437px;top:523.5px;font-size:30px;color:#e0e0e0;">1</div>
<svg style="left:3578px;top:531px" width="22" height="14" viewBox="0 0 22 14"><path d="M2 2 L11 11 L20 2" fill="none" stroke="#c8c8c8" stroke-width="3"/></svg>
<svg style="left:3646px;top:526px" width="16" height="24" viewBox="0 0 16 24"><path d="M14 2 V22 L2 12 Z" fill="#5e5e5e"/></svg>
<svg style="left:3700px;top:526px" width="16" height="24" viewBox="0 0 16 24"><path d="M2 2 V22 L14 12 Z" fill="#5e5e5e"/></svg>
<div class="a" style="left:3428px;top:585px;width:332px;height:51px;background:transparent;border:2px solid #4a4a4a;border-radius:5px;box-sizing:border-box"></div>
<div class="t" style="left:3428px;width:332px;text-align:center;top:594.5px;font-size:30px;color:#e0e0e0">アートボードを編集</div>
<div class="t" style="left:3237px;top:702.5px;font-size:30px;color:#a8a8a8;width:208.0px;text-align:justify;text-align-last:justify;letter-spacing:-1.30px">定規とグリッド</div>
<svg style="left:3469px;top:698px" width="42" height="42" viewBox="0 0 42 42"><path d="M3 3 H40 V11 H11 V40 H3 Z" fill="#b8b8b8"/><path d="M16 7 h2 M22 7 h2 M28 7 h2 M34 7 h2 M7 16 v2 M7 22 v2 M7 28 v2 M7 34 v2" stroke="#323232" stroke-width="2"/></svg>
<svg style="left:3545px;top:698px" width="42" height="42" viewBox="0 0 42 42"><rect x="2" y="2" width="38" height="38" fill="none" stroke="#b8b8b8" stroke-width="3"/><path d="M14.5 2 V40 M27.5 2 V40 M2 14.5 H40 M2 27.5 H40" stroke="#b8b8b8" stroke-width="3"/></svg>
<svg style="left:3620px;top:698px" width="42" height="42" viewBox="0 0 42 42"><defs><pattern id="ck" width="10" height="10" patternUnits="userSpaceOnUse"><rect width="10" height="10" fill="#5a5a5a"/><rect width="5" height="5" fill="#3a3a3a"/><rect x="5" y="5" width="5" height="5" fill="#3a3a3a"/></pattern></defs><rect x="2" y="2" width="38" height="38" fill="url(#ck)" stroke="#b8b8b8" stroke-width="3"/></svg>
<div class="t" style="left:3237px;top:798.5px;font-size:30px;color:#a8a8a8;width:89.0px;text-align:justify;text-align-last:justify;letter-spacing:-1.63px">ガイド</div>
<div class="a" style="left:3451px;top:786px;width:58px;height:57px;background:#1f1f1f;border:2px solid #2b2b2b;border-radius:5px;box-sizing:border-box"></div>
<svg style="left:3460px;top:795px" width="40" height="40" viewBox="0 0 40 40"><path d="M11 2 V38 M20 2 V38 M2 12 H38 M2 28 H38" stroke="#fff" stroke-width="2.5"/></svg>
<svg style="left:3535px;top:795px" width="44" height="40" viewBox="0 0 44 40"><path d="M9 2 V38 M18 2 V38 M2 12 H30 M2 28 H24" stroke="#b8b8b8" stroke-width="2.5"/><rect x="23" y="24" width="18" height="14" fill="#b8b8b8"/><path d="M27 24 V19 A5 5 0 0 1 37 19" fill="none" stroke="#b8b8b8" stroke-width="2.5"/></svg>
<div class="a" style="left:3600px;top:786px;width:58px;height:57px;background:#1f1f1f;border:2px solid #2b2b2b;border-radius:5px;box-sizing:border-box"></div>
<svg style="left:3609px;top:795px" width="40" height="40" viewBox="0 0 40 40"><path d="M8 2 V38 M3 12 H30 M8 12 L16 4 M8 12 L16 20" stroke="#fff" stroke-width="2.5" fill="none"/><path d="M28 16 L20 28 H26 L22 38 L34 24 H28 L32 16 Z" fill="#fff"/></svg>
<div class="t" style="left:3237px;top:893.5px;font-size:30px;color:#a8a8a8;width:268.0px;text-align:justify;text-align-last:justify;letter-spacing:-1.52px">スナップオプション</div>
<div class="a" style="left:3521px;top:881px;width:58px;height:57px;background:#1f1f1f;border:2px solid #2b2b2b;border-radius:5px;box-sizing:border-box"></div>
<svg style="left:3530px;top:890px" width="40" height="40" viewBox="0 0 40 40"><path d="M7 2 V38" stroke="#fff" stroke-width="2.5"/><circle cx="7" cy="20" r="4" fill="#1f1f1f" stroke="#fff" stroke-width="2.5"/><path d="M16 13 H28 A7 7 0 0 1 28 27 H16" fill="none" stroke="#fff" stroke-width="5"/></svg>
<svg style="left:3603px;top:890px" width="42" height="40" viewBox="0 0 42 40"><rect x="2" y="2" width="10" height="36" fill="none" stroke="#b8b8b8" stroke-width="2.5"/><path d="M2 8 h10 M2 14 h10 M2 20 h10 M2 26 h10 M2 32 h10" stroke="#b8b8b8" stroke-width="2"/><path d="M18 13 H30 A7 7 0 0 1 30 27 H18" fill="none" stroke="#b8b8b8" stroke-width="5"/></svg>
<svg style="left:3681px;top:890px" width="42" height="40" viewBox="0 0 42 40"><rect x="2" y="2" width="10" height="10" fill="#b8b8b8"/><rect x="2" y="15" width="10" height="10" fill="#b8b8b8"/><rect x="2" y="28" width="10" height="10" fill="#b8b8b8"/><path d="M18 13 H30 A7 7 0 0 1 30 27 H18" fill="none" stroke="#b8b8b8" stroke-width="5"/></svg>
<div class="t" style="left:3237px;top:989.5px;font-size:30px;color:#a8a8a8;;width:120.0px;text-align:justify;text-align-last:justify;letter-spacing:-0.30px">環境設定</div>
<div class="t" style="left:3238px;top:1064.5px;font-size:30px;color:#a8a8a8;width:142.0px;text-align:justify;text-align-last:justify;letter-spacing:-2.10px">キー入力：</div>
<div class="a" style="left:3395px;top:1048px;width:148px;height:51px;background:#252525;border:2px solid #2e2e2e;border-radius:5px;box-sizing:border-box"></div>
<div class="t" style="left:3405px;top:1058.5px;font-size:30px;color:#e0e0e0;">1 px</div>
<div class="a" style="left:3244px;top:1140px;width:31px;height:31px;background:#b8b8b8;border-radius:4px"></div>
<svg style="left:3244px;top:1140px" width="31" height="31" viewBox="0 0 31 31"><path d="M7 15 L13 22 L24 9" fill="none" stroke="#222" stroke-width="4"/></svg>
<div class="t" style="left:3282px;top:1139.5px;font-size:30px;color:#b0b0b0;width:298.0px;text-align:justify;text-align-last:justify;letter-spacing:-1.00px">プレビュー境界を使用</div>
<div class="a" style="left:3244px;top:1200px;width:31px;height:31px;background:transparent;border:2px solid #9a9a9a;border-radius:4px;box-sizing:border-box"></div>
<div class="t" style="left:3283px;top:1199.5px;font-size:30px;color:#b0b0b0;;width:211.0px;text-align:justify;text-align-last:justify;letter-spacing:-0.30px">角を拡大・縮小</div>
<div class="a" style="left:3244px;top:1260px;width:31px;height:31px;background:transparent;border:2px solid #9a9a9a;border-radius:4px;box-sizing:border-box"></div>
<div class="t" style="left:3283px;top:1259.5px;font-size:30px;color:#b0b0b0;;width:332.0px;text-align:justify;text-align-last:justify;letter-spacing:-0.30px">線幅と効果を拡大・縮小</div>
<div class="t" style="left:3237px;top:1376.5px;font-size:30px;color:#a8a8a8;;width:184.0px;text-align:justify;text-align-last:justify;letter-spacing:-0.30px">クイック操作</div>
<div class="a" style="left:3237px;top:1440px;width:567px;height:52px;background:transparent;border:2px solid #4a4a4a;border-radius:5px;box-sizing:border-box"></div>
<div class="t" style="left:3237px;width:567px;text-align:center;top:1450.5px;font-size:30px;color:#e0e0e0">ドキュメント設定</div>
<div class="a" style="left:3237px;top:1517px;width:567px;height:52px;background:transparent;border:2px solid #4a4a4a;border-radius:5px;box-sizing:border-box"></div>
<div class="t" style="left:3237px;width:567px;text-align:center;top:1527.5px;font-size:30px;color:#e0e0e0">環境設定</div>
<div class="a" style="left:3237px;top:1595px;width:567px;height:52px;background:transparent;border:2px solid #4a4a4a;border-radius:5px;box-sizing:border-box"></div>
<div class="t" style="left:3237px;width:567px;text-align:center;top:1605.5px;font-size:30px;color:#e0e0e0">生成ベクター (Beta)</div>
</body></html>
